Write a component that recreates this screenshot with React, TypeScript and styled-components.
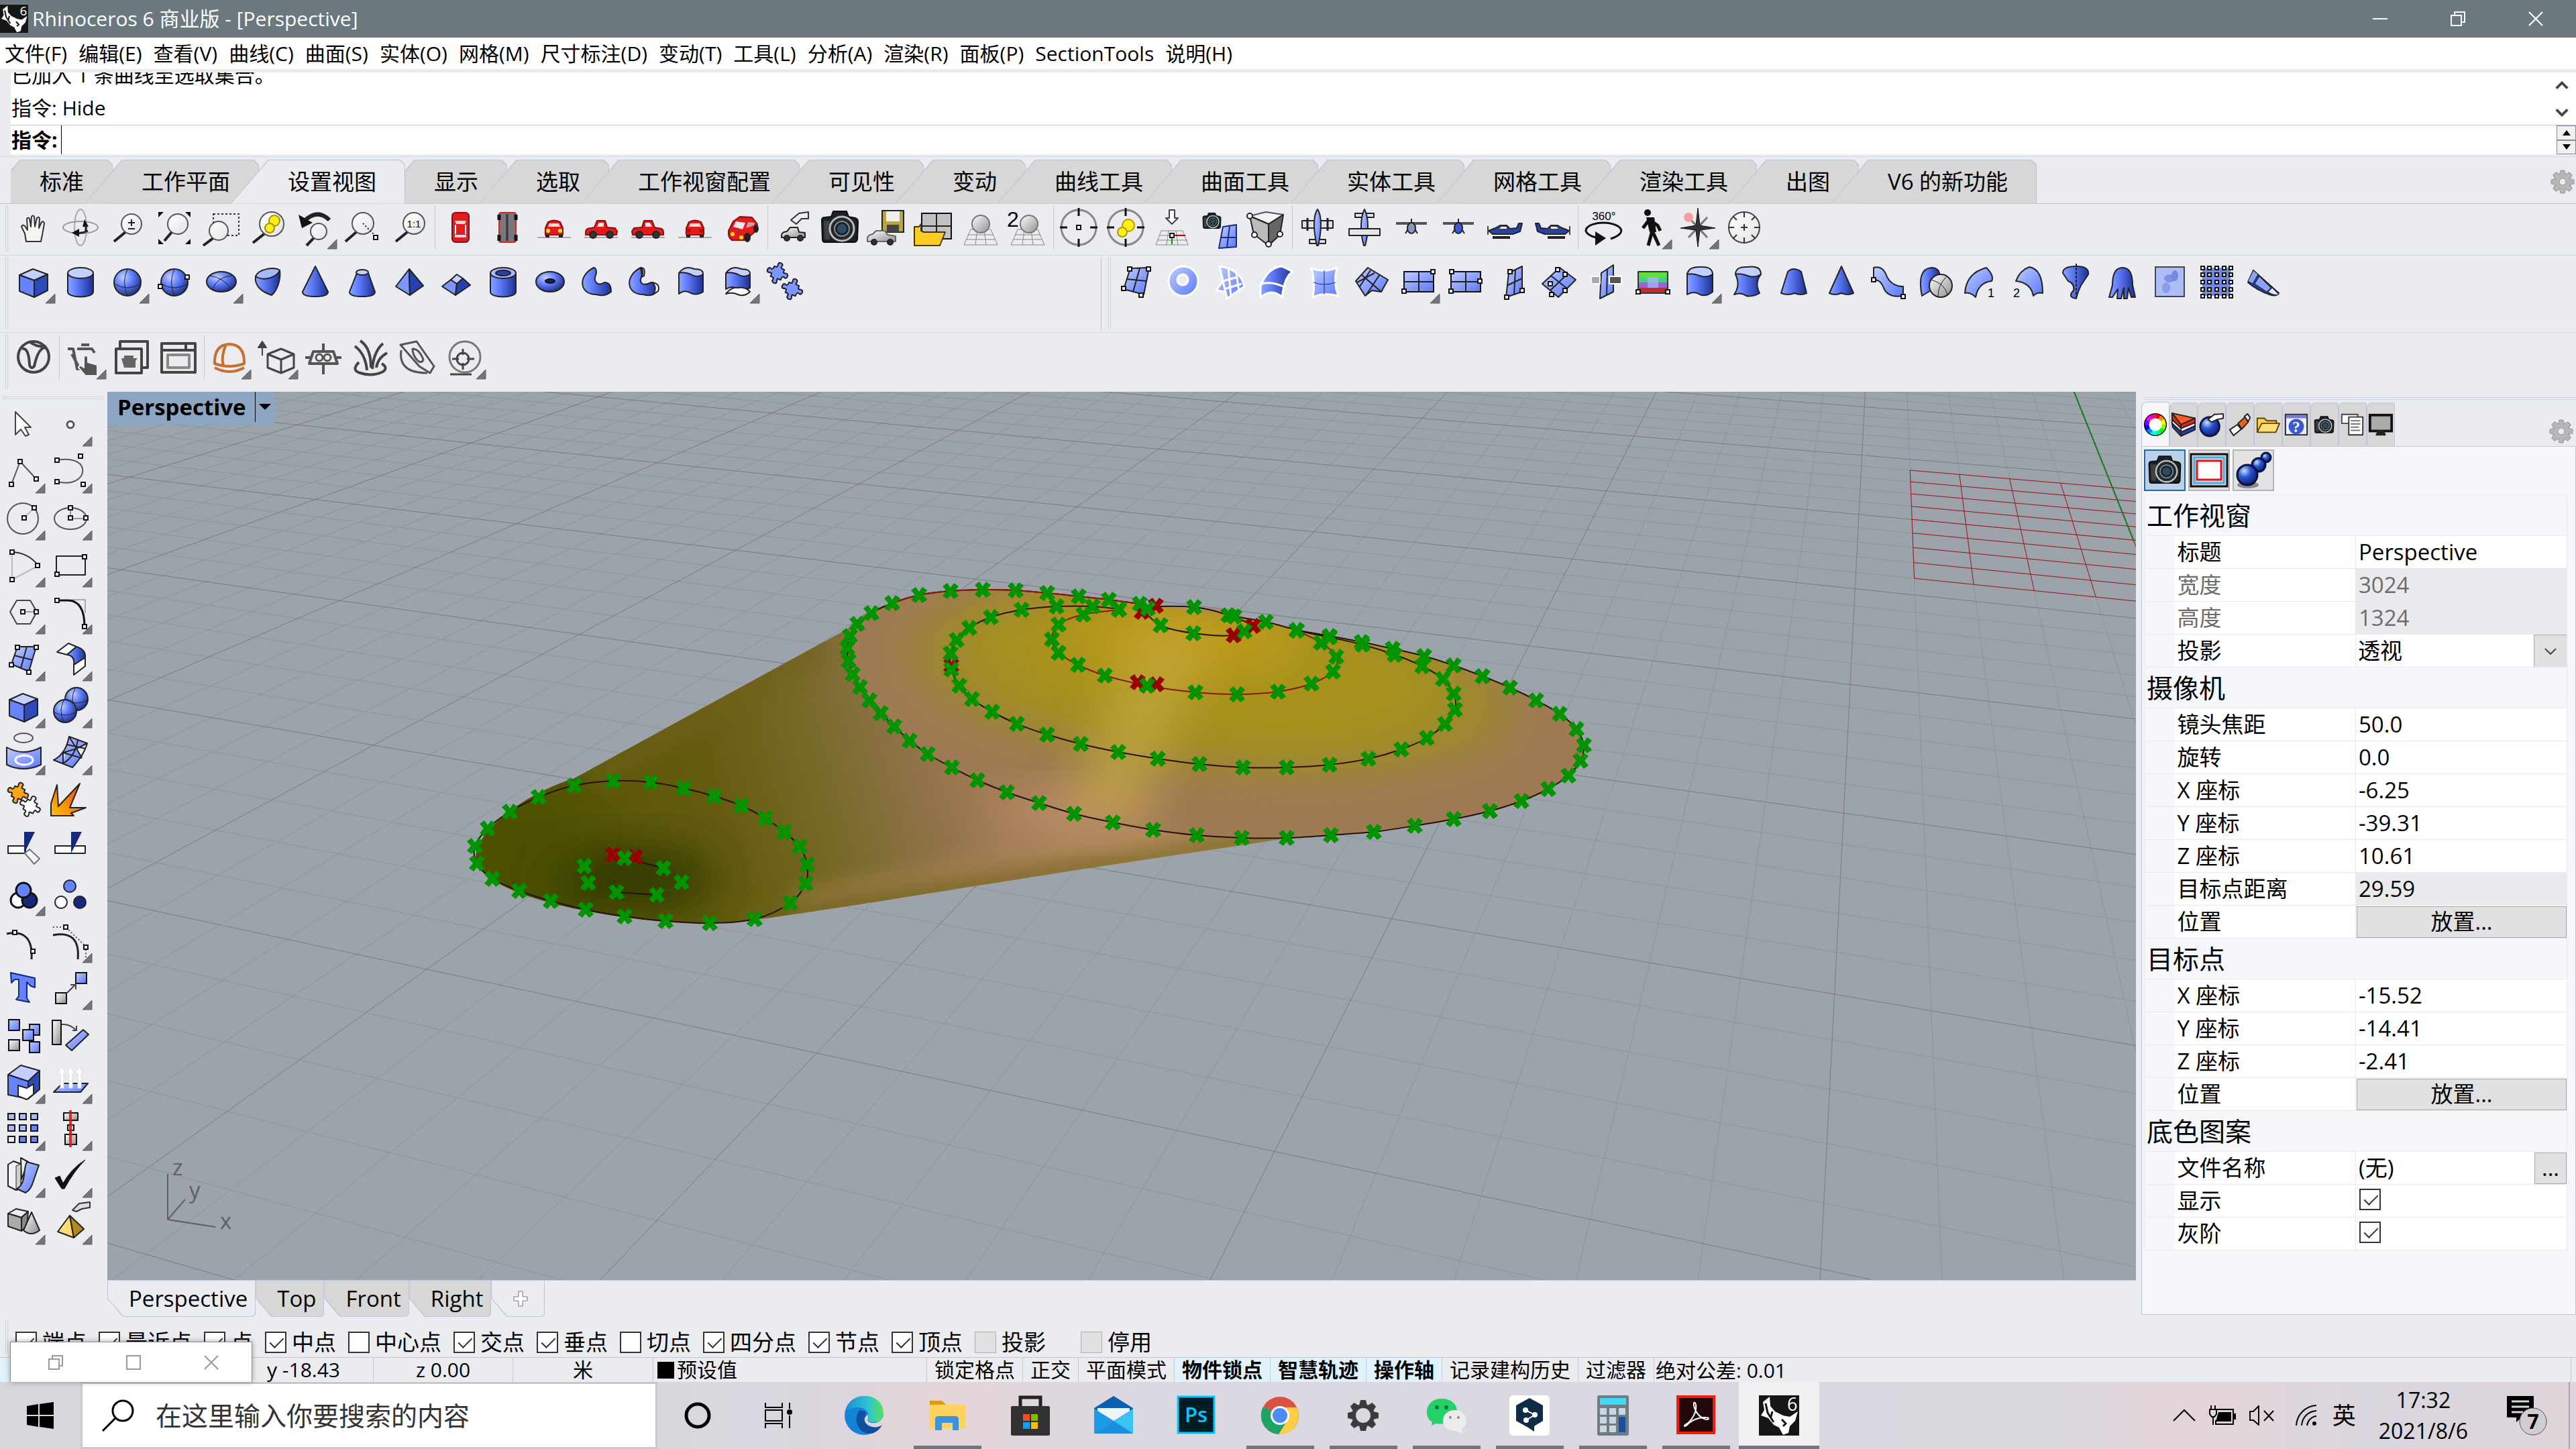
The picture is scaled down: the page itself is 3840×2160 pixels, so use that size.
import React, { ReactNode } from 'react';
import styled, { createGlobalStyle, css } from 'styled-components';

const FONT = `"Open Sans", "Noto Sans CJK SC", sans-serif`;

const GlobalStyle = createGlobalStyle`
  * { box-sizing: border-box; }
  body { margin: 0; background: #ebecf0; }
  button, input, select { font: inherit; color: inherit; margin: 0; }
  svg { display: block; }
`;

/* ---------- drawing primitives ---------- */

type PProps = { d: string; f?: string; s?: string; w?: number; dash?: string; o?: number };
const P = ({ d, f = 'none', s = '#222', w = 2, dash, o }: PProps) => (
  <path d={d} fill={f} stroke={s} strokeWidth={w} strokeDasharray={dash} opacity={o} strokeLinejoin="round" />
);
const E = ({ x, y, rx, ry = rx, f = 'none', s = '#222', w = 2 }: { x: number; y: number; rx: number; ry?: number; f?: string; s?: string; w?: number }) => (
  <ellipse cx={x} cy={y} rx={rx} ry={ry} fill={f} stroke={s} strokeWidth={w} />
);
const H = ({ x, y }: { x: number; y: number }) => (
  <rect x={x - 3} y={y - 3} width="6" height="6" fill="#fff" stroke="#111" strokeWidth="2" />
);
const B = ({ x, y, w = 16, h = 16, f = 'url(#patch)' }: { x: number; y: number; w?: number; h?: number; f?: string }) => (
  <rect x={x} y={y} width={w} height={h} fill={f} stroke="#111" strokeWidth="2" />
);
const Lens = ({ x, y, r, hx, hy }: { x: number; y: number; r: number; hx: number; hy: number }) => (
  <>
    <P d={`M${x - r * 0.6} ${y + r * 0.8}L${hx} ${hy}`} s="#222" w={4} />
    <E x={x} y={y} rx={r} f="url(#glass)" s="#555" />
  </>
);
const Puzzle = ({ f }: { f: string }) => (
  <P f={f} d="M-8 -8L-4 -8C-2 -10 -5 -12 -3 -15C0 -17 4 -15 3 -12C1 -9 3 -8 8 -8L8 -4C10 -2 12 -5 15 -3C17 0 15 4 12 3C9 1 8 3 8 8L3 8C1 9 5 12 3 15C0 17 -5 15 -3 11C-2 9 -4 8 -8 8L-8 4C-9 1 -12 5 -15 3C-17 0 -15 -5 -11 -3C-9 -2 -8 -4 -8 -8Z" />
);
const Camera = () => (
  <>
    <P f="#1d2124" s="#0c0c0c" d="M8 24 Q8 20 13 20 L22 19 L25 11 L45 11 L48 19 L58 21 Q62 22 62 27 L61 53 Q60 57 56 57 L13 57 Q9 57 9 53 Z" />
    <P f="#3b4146" s="none" d="M11 25h9v28h-8z" />
    <E x={38} y={37} rx={18} f="#23282b" s="#b9bdbf" w={3} />
    <E x={38} y={37} rx={11} f="#16222a" s="#7f8a8c" w={2} />
    <E x={38} y={37} rx={6} f="#29504e" s="#304a7a" w={2} />
  </>
);
const Globe = ({ x, y, r }: { x: number; y: number; r: number }) => <E x={x} y={y} rx={r} f="url(#navy)" s="#0b1240" w={3} />;
const Gear = ({ size = 36 }: { size?: number }) => (
  <svg width={size} height={size} viewBox="-18 -18 36 36" aria-hidden="true">
    {[0, 45, 90, 135, 180, 225, 270, 315].map((a) => (
      <path key={a} d="M-3 -17h6l2 8h-10z" fill="#b7b7b9" stroke="#98989a" transform={`rotate(${a})`} />
    ))}
    <circle r="11" fill="#b7b7b9" />
    <circle r="5" fill="#ebecf0" stroke="#98989a" />
  </svg>
);
const Ground = () => <P d="M10 50H60" s="#a9abad" w={2} />;
const CarBody = () => (
  <>
    <P f="#e21c1c" s="#8d0d0d" d="M12 42 Q12 36 20 36 L25 35 L29 25 L41 25 L44 35 L56 36 L59 41 L58 46 H12Z" />
    <P f="#f4e4e4" s="none" d="M29 34 L32 28 H39 V34Z" />
    <E x={23} y={46} rx={5} f="#333" />
    <E x={48} y={46} rx={5} f="#333" />
  </>
);
const CarFront = ({ lamp }: { lamp: string }) => (
  <>
    <P f="#e21c1c" s="#8d0d0d" d="M26 27 Q35 22 44 27 L48 36 V46 H22 V36Z" />
    <P f="#f6dada" s="none" d="M28 29 H42 L44 34 H26Z" />
    <E x={26} y={40} rx={3} f={lamp} s="none" />
    <E x={44} y={40} rx={3} f={lamp} s="none" />
    <P s="#222" w={4} d="M22 48h6M42 48h6" />
  </>
);
const Plane = () => (
  <>
    <P f="#dfe2e6" d="M12 25 H58 V36 H12Z M23 53 H47 V59 H23Z" />
    <P w={3} d="M20 21V40M50 21V40" />
    <P f="url(#patch)" d="M35 8 C42 18 41 40 36 62 H34 C29 40 28 18 35 8Z" />
  </>
);
const Mesh = ({ y = 38 }: { y?: number }) => (
  <P s="#888" w={1} d={`M20 ${y}H50L60 61H10ZM16 ${y + 8}H54M13 ${y + 15}H57M30 ${y}L27 61M40 ${y}L43 61`} />
);

/* ---------- tool icons, each on a 70 unit square ---------- */

const I: Record<string, ReactNode> = {
  hand: <P f="#f7f5f0" s="#333" d="M24 56 L22 44 L17 34 Q18 30 22 33 L26 39 L25 22 Q27 19 29 22 L31 34 L32 19 Q34 16 36 19 L37 34 L40 21 Q43 18 44 22 L43 36 L47 27 Q50 25 51 29 L48 46 L46 56Z" />,
  orbit: <><E x={35} y={35} rx={9} ry={27} s="#aaa" /><E x={35} y={35} rx={26} ry={9} s="#999" /><P f="#111" s="none" d="M22 43l11-6v12zM38 34l3-11 6 11z" /><P w={3} d="M43 32V42M31 43Q38 44 46 40" /></>,
  zoomDyn: <><Lens x={41} y={30} r={15} hx={15} hy={56} /><P w={2} d="M36 28h10M41 23v10M36 37h10" /></>,
  zoomExt: <><Lens x={40} y={30} r={15} hx={20} hy={55} /><P f="#111" s="none" d="M11 12h8l-8 8zM59 12h-8l8 8zM11 60h8l-8-8zM59 60h-8l8-8z" /></>,
  zoomWin: <><P dash="3 3" s="#333" d="M23 15H61V47H23Z" /><Lens x={31} y={40} r={14} hx={8} hy={62} /></>,
  zoomSel: <><Lens x={40} y={30} r={18} hx={12} hy={58} /><E x={44} y={25} rx={8} f="#ffee1c" s="#a59000" /><E x={37} y={36} rx={7} f="#ffee1c" s="#a59000" /></>,
  undoView: <><P s="#222" w={6} d="M18 26Q38 6 56 24" /><P f="#111" s="none" d="M10 16l5 20 16-8z" /><Lens x={40} y={41} r={12} hx={22} hy={62} /></>,
  zoomTarget: <><Lens x={36} y={29} r={16} hx={10} hy={56} /><P dash="2 3" d="M36 29L53 46" /><H x={55} y={50} /></>,
  zoomOne: <><Lens x={42} y={29} r={16} hx={15} hy={56} /><text x="42" y="35" fontSize="15" textAnchor="middle" fontFamily="Liberation Sans">1:1</text></>,
  carTop: <><rect x="23" y="13" width="25" height="44" rx="5" fill="#e21c1c" stroke="#8d0d0d" strokeWidth="2" /><P f="#f6dada" s="none" d="M27 25h17l-2 5H29zM27 46h17v4H27z" /><P s="#fff" d="M28 31v14M43 31v14" /></>,
  carBottom: <><rect x="23" y="13" width="25" height="44" rx="3" fill="#77777f" stroke="#e21c1c" strokeWidth="2" /><P w={5} s="#111" d="M23 16v8M48 16v8M23 46v9M48 46v9" /><P s="#333" w={3} d="M35 15V55" /></>,
  carFront: <><Ground /><CarFront lamp="#ffe11a" /></>,
  carRight: <><Ground /><CarBody /></>,
  carLeft: <><Ground /><g transform="translate(70 0) scale(-1 1)"><CarBody /></g></>,
  carBack: <><Ground /><CarFront lamp="#c00" /></>,
  carPersp: <><P f="#e21c1c" s="#8d0d0d" d="M15 40L22 26L32 19L50 20L58 30L56 40L40 54L20 54Q14 50 15 40Z" /><P f="#f8e6e6" s="none" d="M22 34L26 26L40 28L36 38Z" /><P f="#c9a0a0" s="none" d="M41 36L44 27L54 28L53 32Z" /><E x={21} y={45} rx={3} f="#ffe11a" s="none" /><E x={34} y={50} rx={3} f="#ffe11a" s="none" /><E x={43} y={50} rx={4} ry={6} f="#222" /><E x={56} y={37} rx={3} ry={5} f="#222" /></>,
  namedView: <><P f="#eee" s="#333" d="M32 24 L44 14 L58 12 V22 L48 22 L40 30Z" /><P f="url(#gray)" d="M18 47 Q18 42 26 41 L31 35 H42 L44 42 L53 43 V50 H18Z" /><E x={26} y={51} rx={4} f="#333" /><E x={46} y={51} rx={4} f="#333" /></>,
  camera: <Camera />,
  saveView: <><rect x="28" y="10" width="32" height="32" fill="#b7a446" stroke="#222" strokeWidth="2" /><rect x="34" y="11" width="20" height="15" fill="#eee" /><rect x="35" y="31" width="18" height="11" fill="#444" /><P f="url(#gray)" s="#666" d="M6 52Q6 46 14 45L19 40H32L36 46L48 48V56H6Z" /><E x={16} y={57} rx={4} f="#333" /><E x={40} y={57} rx={4} f="#333" /></>,
  openView: <><rect x="17" y="14" width="44" height="38" fill="#c2c2c4" stroke="#111" strokeWidth="2" /><P d="M39 14V52M17 33H61" /><P f="#fc2" s="#4a3500" d="M6 62V34h7l3-4v10L20 42H52L44 62Z" /></>,
  sphereOne: <><Mesh /><E x={35} y={30} rx={13} f="url(#gray)" s="#777" /></>,
  sphereTwo: <><Mesh /><E x={37} y={30} rx={13} f="url(#gray)" s="#777" /><text x="4" y="34" fontSize="32" fontFamily="Liberation Sans">2</text></>,
  target: <><E x={35} y={35} rx={26} s="#888" w={3} /><P w={3} s="#111" d="M35 6V18M35 52V64M7 35H18M52 35H63" /><H x={35} y={35} /></>,
  targetSel: <><E x={35} y={35} rx={26} s="#888" w={3} /><E x={39} y={32} rx={9} f="#ffee1c" s="#b09a00" /><E x={30} y={42} rx={7} f="#ffee1c" s="#b09a00" /><P w={3} s="#111" d="M35 6V18M35 52V64M7 35H18M52 35H63" /></>,
  cplane: <><P s="#888" w={1} d="M18 40H50L58 61H10ZM15 47H54M12 54H57M29 40L26 61M40 40L43 61" /><P f="#fff" s="#444" d="M30 9h8v12h5l-9 9-9-9h5z" /><P s="#090" d="M34 46V60" /><P s="#c00" d="M34 47H54" /><H x={34} y={47} /></>,
  camPlane: <><g transform="translate(6 8) scale(.5)"><Camera /></g><P f="url(#patch)" s="#1d2c80" d="M40 34L60 31V64L34 66Z M50 33L46 65M37 50H60" /></>,
  cage: <><P f="#f3f3f3" s="#555" d="M10 18L34 12L60 16L38 30Z" /><P f="#bbb" d="M10 18L38 30V62L16 45Z" /><P f="#666" d="M60 16L38 30V62L55 46Z" /><E x={10} y={18} rx={4} f="#fff" /><E x={17} y={46} rx={4} f="#fff" /><E x={38} y={60} rx={4} f="#fff" /><E x={55} y={45} rx={4} f="#fff" /></>,
  planeTop: <Plane />,
  planeBottom: <><P f="#dfe2e6" d="M21 14H49V20H21Z" /><P f="url(#patch)" d="M35 8 C42 22 41 44 36 62 H34 C29 44 28 22 35 8Z" /><P f="#e3e5e8" d="M12 37H58V47H12Z" /></>,
  planeFront: <><P d="M12 29H58" s="#555" w={4} /><P d="M35 22v8M26 44l5-8M44 44l-5-8" /><E x={35} y={36} rx={6} ry={8} f="#8d97c4" /></>,
  planeBack: <><P d="M12 29H58" s="#555" w={4} /><P d="M35 22v8M26 44l5-8M44 44l-5-8" /><E x={35} y={36} rx={6} ry={8} f="#3d5bd8" /></>,
  planeLeft: <><P f="#2541b4" d="M10 40L20 36L27 32H37L42 37L52 36L55 29H60L57 41L46 45H16Z" /><P f="#e8eefc" s="none" d="M25 38l4-4h8v5z" /><P s="#444" w={2} d="M9 33V46M20 38H44" /><P w={4} d="M16 50H42" /></>,
  planeRight: <g transform="translate(70 0) scale(-1 1)"><P f="#2541b4" d="M10 40L20 36L27 32H37L42 37L52 36L55 29H60L57 41L46 45H16Z" /><P f="#e8eefc" s="none" d="M25 38l4-4h8v5z" /><P s="#444" w={2} d="M9 33V46M20 38H44" /><P w={4} d="M16 50H42" /></g>,
  turn: <><text x="36" y="24" fontSize="17" textAnchor="middle" fontFamily="Liberation Sans">360°</text><P w={3} d="M24 50C-4 42 12 28 35 28S76 42 46 52" s="#111" /><P f="#111" s="none" d="M23 41l16 10-16 11z" /></>,
  walk: <><E x={31} y={13} rx={5} f="#111" s="none" /><P s="#111" w={5} d="M33 22L38 40L32 62M38 40L48 62M33 24L24 36M34 24L46 32L50 40" /><P f="#111" s="none" d="M29 20h12l3 22H34z" /></>,
  compass: <><P s="#777" w={3} d="M22 20L50 50M50 20L22 50" /><P f="#333" s="#111" w={1} d="M36 6L39 32L62 36L39 39L36 64L33 39L10 36L33 32Z" /><E x={22} y={20} rx={7} f="#f4a0a0" s="none" /></>,
  dial: <><E x={35} y={35} rx={23} f="url(#glass)" s="#444" /><P s="#333" d="M35 12v8M35 50v8M12 35h8M50 35h8M30 35h10M35 30v10M19 19l5 5M51 51l-5-5M51 19l-5 5M19 51l5-5" /></>,

  box: <><P f="#c3d0ff" d="M14 25L34 16L56 24L36 33Z" /><P f="#6582ff" d="M14 25L36 33V58L14 49Z" /><P f="#2f49b8" d="M56 24L36 33V58L56 48Z" /></>,
  cylinder: <><P f="url(#tube)" d="M16 22V50C16 60 54 60 54 50V22" /><E x={35} y={22} rx={19} ry={8} f="#c3d0ff" /></>,
  sphere: <><E x={35} y={36} rx={20} f="url(#ball)" /><P w={1} d="M15 38Q35 50 55 38M35 16Q26 36 35 56" /></>,
  sphereH: <><E x={35} y={36} rx={20} f="url(#ball)" /><P w={1} d="M15 38Q35 50 55 38M35 16Q26 36 35 56" /><H x={54} y={28} /><H x={14} y={42} /></>,
  ellipsoid: <><E x={35} y={35} rx={22} ry={15} f="url(#ball)" /><P w={1} d="M18 26Q40 30 50 46M50 26Q28 28 22 46" /></>,
  paraboloid: <><P f="url(#tube)" d="M16 27C14 40 24 50 40 55C48 48 54 32 52 18Z" /><P f="#a8b9ff" d="M16 27C20 16 44 12 52 18C50 26 30 36 16 27Z" /></>,
  cone: <P f="url(#tube)" d="M35 12L54 50Q54 57 35 57Q16 57 16 50Z" />,
  truncCone: <><P f="url(#tube)" d="M27 22L16 50Q16 57 35 57Q54 57 54 50L44 22Z" /><E x={35} y={21} rx={9} ry={4} f="#c3d0ff" /></>,
  pyramid: <><P f="#7d96ff" d="M35 16L15 42L36 55Z" /><P f="#2742b0" d="M35 16L36 55L56 41Z" /></>,
  truncPyramid: <><P f="#7d96ff" d="M27 32L14 42L34 55L36 38Z" /><P f="#2742b0" d="M36 38L34 55L56 40L45 30Z" /><P f="#c3d0ff" d="M27 32L36 24L45 30L36 38Z" /></>,
  tube: <><P f="url(#tube)" d="M16 22V50C16 60 54 60 54 50V22" /><E x={35} y={22} rx={19} ry={8} f="#a8b9ff" /><E x={35} y={22} rx={11} ry={4} f="#2742b0" /></>,
  torus: <><E x={35} y={35} rx={21} ry={15} f="url(#ball)" /><E x={35} y={34} rx={7} ry={3} f="#16206e" s="#111" /></>,
  pipe: <P f="url(#tube)" d="M30 14C6 26 8 54 34 54Q46 58 56 50Q56 36 46 36C36 42 28 36 34 22Q34 14 30 14Z" />,
  pipeCap: <><P f="url(#tube)" d="M30 14C6 26 8 54 34 54Q46 58 54 50Q54 36 46 36C34 42 26 38 32 26Z" /><P f="#fff" d="M30 14Q38 14 35 26L31 28Q36 20 30 14ZM47 36Q60 38 56 49L48 54Q56 44 47 36Z" /></>,
  extrude: <><P f="url(#tube)" d="M17 22V53Q26 46 35 52Q44 56 53 50V22" /><P f="#c3d0ff" d="M17 22Q26 10 40 16Q54 16 53 24Q44 30 35 24Q26 20 17 22Z" /></>,
  extrudeCap: <><P f="url(#tube)" d="M17 22V46Q26 40 35 46Q44 50 53 44V22" /><P f="#c3d0ff" d="M17 22Q26 10 40 16Q54 16 53 24Q44 30 35 24Q26 20 17 22Z" /><P f="#fff" d="M17 53Q26 42 35 44Q46 42 53 50Q44 58 35 54Q26 50 17 53Z" /></>,
  puzzles: <><g transform="translate(24 22) rotate(20)"><Puzzle f="#7d96ff" /></g><g transform="translate(46 46) rotate(20)"><Puzzle f="#7d96ff" /></g></>,

  srfPts: <><P f="url(#patch)" d="M26 15L54 14L46 54L16 46Z M40 15L30 50M21 31L50 34" /><H x={25} y={16} /><H x={53} y={16} /><H x={16} y={45} /><H x={42} y={55} /></>,
  srfRing: <><E x={35} y={34} rx={22} f="url(#patch)" s="#fff" w={3} /><E x={34} y={32} rx={8} f="#ebecf0" s="#fff" w={3} /></>,
  srfLoft: <P f="url(#patch)" s="#fff" w={3} d="M19 12Q50 16 56 42L30 60L28 50L14 48L24 34Z M24 34L46 28M26 46L52 38M32 14L36 58M24 34L30 60M44 22L48 50" />,
  srfSweep: <P f="url(#tube)" s="#fff" w={3} d="M10 42Q20 14 42 12L58 20Q46 26 42 58Q28 44 10 58Z M12 38Q26 34 44 42" />,
  srfPatch: <><P f="url(#patch)" s="#fff" w={3} d="M16 15Q36 22 54 14Q48 36 56 56Q34 50 18 58Q22 36 16 15Z" /><P w={1} s="#1d2c80" d="M35 18V54M19 36Q36 42 52 36" /></>,
  srfNet: <P f="url(#patch)" s="#222" w={2} d="M12 34L30 14L60 32L50 50L36 48L26 56ZM20 24L50 50M34 18L18 42M48 24L28 54M14 36L40 22" />,
  srfPlane: <><B x={14} y={20} w={44} h={30} /><P d="M36 20V50M14 35H58" /><H x={57} y={20} /><H x={14} y={49} /></>,
  srfPlane3: <><B x={14} y={20} w={44} h={30} /><P d="M36 20V50M14 35H58" /><H x={15} y={20} /><H x={14} y={49} /><H x={57} y={34} /></>,
  srfVert: <><P f="url(#patch)" d="M30 22L50 12V50L26 58Z M40 17L38 54M29 40L50 30" /><H x={32} y={20} /><H x={50} y={48} /><H x={27} y={58} /></>,
  srfFree: <><P f="url(#patch)" d="M10 38L36 14L60 32L34 58Z M23 26L47 45M22 48L48 23" /><H x={33} y={17} /><H x={44} y={24} /><H x={22} y={38} /><H x={44} y={48} /><H x={24} y={54} /></>,
  srfCut: <><P f="url(#patch)" d="M28 22L46 10V50L26 60Z M37 16L36 55" /><P f="#aaa" s="#fff" d="M13 27H26V38H13Z" /><P f="#555" s="#fff" d="M40 27H58V38H40Z" /></>,
  srfHeat: <><rect x="13" y="20" width="44" height="8" fill="#5fe03a" /><rect x="13" y="28" width="44" height="8" fill="#4ccb8c" /><rect x="13" y="36" width="44" height="8" fill="#9c63cf" /><rect x="13" y="44" width="44" height="8" fill="#c22c2c" /><rect x="27" y="28" width="16" height="16" fill="#a6b9ff" opacity=".7" /><P s="#333" d="M13 20H57V52H13Z" /><H x={13} y={50} /><H x={57} y={50} /></>,
  srfExt1: <><P f="url(#tube)" d="M16 22V54Q26 48 35 54Q44 58 54 50V22" /><P f="#c3d0ff" d="M16 24Q18 12 36 13Q54 12 54 24Q44 30 35 26Q24 22 16 24Z" /></>,
  srfExt2: <><P f="url(#tube)" d="M18 24Q26 40 16 54Q26 50 34 56Q44 58 54 52Q46 36 56 24" /><P f="#c3d0ff" d="M18 24Q18 12 36 13Q56 10 56 24Q46 30 36 26Q26 22 18 24Z" /></>,
  srfTaper: <P f="url(#tube)" d="M26 20Q34 12 46 20L54 52Q46 56 36 52Q26 56 16 52Z" />,
  srfPoint: <P f="url(#tube)" d="M36 12L54 52Q46 56 36 52Q26 56 18 52Z" />,
  srfRibbon: <><P f="url(#patch)" d="M14 14Q28 10 34 28Q42 42 58 42V56Q34 60 28 42Q24 32 14 32Z" /><H x={14} y={32} /><H x={58} y={57} /></>,
  srfWrap: <><P f="url(#tube)" d="M16 56Q8 16 30 14Q40 14 42 22V40Z" /><E x={44} y={41} rx={17} f="url(#gray)" /><P w={1} d="M30 32Q50 38 54 54M52 28Q40 40 40 57" /></>,
  srfRail1: <><P f="url(#patch)" d="M10 52Q12 22 42 14Q54 26 50 34Q30 36 26 58Q18 50 10 52Z" /><text x="44" y="58" fontSize="18" fontFamily="Liberation Sans">1</text></>,
  srfRail2: <><P f="url(#patch)" d="M16 34Q22 18 36 13Q56 16 56 52Q48 50 42 56Q38 36 16 34Z" /><text x="12" y="58" fontSize="18" fontFamily="Liberation Sans">2</text></>,
  srfRevolve: <><P f="url(#tube)" d="M16 22Q16 12 36 12Q56 12 54 24L46 36Q40 44 36 60Q22 58 32 48Q34 38 24 34Z" /><P dash="4 2" d="M36 8V60" /></>,
  srfDrape: <P f="url(#tube)" d="M20 40Q20 14 35 14Q50 14 50 40L54 58H48L44 44L42 60H37V44L33 60H27L28 46L20 58H15Z" />,
  srfPicture: <><rect x="14" y="13" width="43" height="44" fill="#aebdf6" stroke="#445" strokeWidth="2" /><E x={35} y={30} rx={8} ry={6} f="#7d92e4" s="none" /><E x={43} y={26} rx={5} ry={8} f="#7388e0" s="none" /><E x={30} y={44} rx={6} ry={8} f="#899ce9" s="none" /></>,
  srfGrid: <><rect x="14" y="14" width="42" height="42" fill="#7288e8" />{[14, 24, 35, 46, 56].map((y) => [14, 24, 35, 46, 56].map((x) => <rect key={`${x}-${y}`} x={x - 2} y={y - 2} width="5" height="5" fill="#fff" stroke="#111" strokeWidth="2" />))}</>,
  srfEraser: <><P f="#27409f" d="M12 36L20 18L58 52Q54 58 44 54Q26 48 12 36Z" /><P f="#8da2ff" w={1} d="M12 34L20 18L27 24L19 38Z M22 38L29 27L46 44L40 50Z" /><P f="#dfe6ff" w={1} d="M42 50L48 44L58 54Q50 56 42 50Z" /></>,

  vray: <><E x={35} y={34} rx={23} s="#444" w={4} /><P s="#444" w={4} d="M18 22Q28 20 29 46Q31 53 36 48Q42 20 53 20M30 12Q40 20 53 18" /></>,
  teapotHand: <><P s="#555" w={4} d="M10 22L18 22L24 52H44M24 22H46L50 28M30 16H42M26 48L16 30" /><P f="#555" s="#eee" d="M34 34V50L28 46L26 50L36 62H54V46L40 42V34Q37 30 34 34Z" /></>,
  teapotFrame: <><P s="#444" w={4} d="M18 22V11H59V50H50" /><P s="#444" w={4} d="M12 22H50V58H12Z" /><P f="#666" s="none" d="M20 36h4v-4h14v4h6l-3 4v10H24z" /></>,
  frameWin: <><P s="#444" w={4} d="M10 14H60V57H10ZM10 24H60M46 14V24" /><P s="#888" w={4} d="M19 31H51V50H19Z" /></>,
  dome: <><P s="#c96f2d" w={4} d="M13 44Q12 16 35 15Q58 16 57 44Q35 52 13 44ZM30 15Q22 34 26 47" /><P s="#c96f2d" w={4} d="M13 50Q35 62 57 50" /></>,
  cubeUp: <><P s="#444" w={3} d="M22 30L42 22L61 30V50L42 58L22 50ZM22 30L42 38L61 30M42 38V58" /><P f="#444" s="#444" d="M14 11l-6 9h12zM14 20v12" /></>,
  planeInf: <><P s="#555" w={4} d="M20 26H50L56 44H14ZM8 35H18M52 35H62M35 14V26M35 44V60" /><E x={29} y={35} rx={5} s="#555" w={3} /><E x={41} y={35} rx={5} s="#555" w={3} /></>,
  fur: <P s="#444" w={4} d="M18 42Q6 54 20 58Q38 64 54 56Q62 50 52 44M30 54Q28 30 12 18M36 50Q36 20 20 10M38 52Q40 26 54 14M44 50Q46 36 60 28" />,
  clipper: <><P s="#555" w={3} d="M10 16L34 11L60 48L54 58L38 48Z" /><P s="#555" w={3} d="M28 22Q38 22 44 38Q42 44 36 40Q28 32 28 22Z" /><P s="#555" w={3} d="M11 24Q6 58 50 58" /></>,
  domeTarget: <><E x={36} y={34} rx={23} s="#777" w={3} /><E x={33} y={37} rx={9} s="#444" w={3} /><P s="#444" w={3} d="M33 22V31M33 43V53M17 37H27M39 37H50M14 60H46" /></>,

  select: <P f="#fff" s="#444" d="M23 16V50L31 42L38 52L43 50L37 39H46Z" />,
  point: <E x={35} y={35} rx={5} f="#fff" s="#555" w={3} />,
  polyline: <><P s="#555" d="M17 54L30 20L54 46" /><H x={17} y={54} /><H x={30} y={20} /><H x={54} y={46} /></>,
  curve: <><P s="#555" d="M15 18C70 8 62 62 15 50" /><H x={15} y={18} /><H x={15} y={50} /><H x={50} y={12} /><H x={54} y={54} /></>,
  circle: <><E x={34} y={35} rx={23} s="#555" /><P s="#bbb" d="M35 35L50 20" /><H x={36} y={34} /><H x={51} y={19} /></>,
  ellipse: <><E x={35} y={35} rx={24} ry={16} s="#555" /><P s="#999" d="M35 19V35H58" /><H x={35} y={34} /><H x={58} y={34} /><H x={35} y={19} /></>,
  arc: <><P s="#bbb" d="M18 15V56L56 36" /><P s="#333" d="M18 15Q42 16 56 34" /><H x={18} y={15} /><H x={56} y={35} /><H x={18} y={56} /></>,
  rect: <><P d="M14 21H57V49H14Z" /><H x={56} y={22} /><H x={15} y={48} /></>,
  polygon: <><P s="#444" d="M15 34L25 17H45L55 34L45 52H25Z" /><P s="#999" d="M34 34H54" /><H x={34} y={34} /><H x={54} y={34} /></>,
  fillet: <><P s="#aaa" d="M36 16H57V36" /><P s="#111" w={3} d="M16 17H32Q56 18 56 56" /><H x={15} y={17} /><H x={56} y={56} /></>,
  patch: <><P f="url(#patch)" d="M26 16H54L43 53L17 42Z M40 16L31 48M21 29L49 36" /><H x={26} y={17} /><H x={54} y={17} /><H x={17} y={43} /><H x={43} y={54} /></>,
  srfFillet: <><P f="#fff" d="M15 24L32 11L44 16L30 28Z" /><P f="#fff" d="M57 32V45L40 58V43Z" /><P f="url(#tube)" d="M30 28L44 16Q58 20 57 32L40 43Q42 30 30 28Z" /></>,
  spheres: <><E x={44} y={24} rx={17} f="url(#ball)" /><P w={1} d="M28 26Q44 34 60 26M42 8Q34 24 42 40" /><E x={27} y={42} rx={17} f="url(#ball)" /><P w={1} d="M11 44Q27 52 43 44M25 26Q17 42 25 58" /></>,
  project: <><E x={35} y={12} rx={14} ry={7} s="#555" /><P f="url(#patch)" d="M10 26Q35 40 61 26V52Q35 64 10 52Z" /><E x={36} y={45} rx={13} ry={7} s="#fff" w={3} /></>,
  mesh: <P f="url(#patch)" d="M33 10L60 20Q56 36 38 56L10 45Q28 36 33 10Z M24 34L52 42M30 22L58 28M46 15Q42 40 24 50M33 10L44 28L24 34L24 50M60 20L44 28L52 42" />,
  join: <><g transform="translate(45 44) rotate(25)"><Puzzle f="#fff" /></g><g transform="translate(27 24) rotate(20)"><Puzzle f="#ffa515" /></g></>,
  explode: <P f="url(#fire)" d="M6 58V40L15 12L17 44L49 10L34 46H58L36 54L40 58Z" />,
  trim: <><P f="#fff" d="M12 33H38V44H12Z" /><P f="#f4f4f4" s="#777" d="M37 44L44 38L59 52L51 60Z" /><P f="#16287c" s="none" d="M36 12H52L36 44Z" /></>,
  split: <><P f="#fff" d="M12 33H57V44H12Z" /><P f="#16287c" s="none" d="M36 12H52L36 44Z" /></>,
  group: <><E x={27} y={44} rx={11} f="#fff" w={3} s="#111" /><E x={44} y={44} rx={11} f="#16287c" w={3} s="#111" /><E x={35} y={29} rx={11} f="#6582ff" w={3} s="#111" /></>,
  ungroup: <><E x={21} y={47} rx={9} f="#fff" /><E x={49} y={47} rx={9} f="#16287c" /><E x={34} y={23} rx={9} f="#6582ff" /></>,
  editPts: <><P w={3} d="M10 24Q50 16 47 62" /><H x={22} y={22} /><H x={49} y={50} /></>,
  ctrlPts: <><P w={3} d="M9 26Q50 18 46 62" /><P dash="2 3" s="#555" d="M9 14H28L58 43V62" /><H x={28} y={14} /><H x={58} y={44} /></>,
  text: <P f="#6582ff" s="#16287c" d="M16 12L52 20V34L46 32L40 26V50L44 56L24 52L28 47V22L22 22L17 27Z" />,
  move: <><B x={13} y={42} f="url(#gray)" /><B x={43} y={12} /><P d="M30 42L42 30M35 30H43V37" s="#444" /></>,
  copy: <><B x={13} y={12} /><B x={44} y={19} w={15} /><B x={34} y={27} /><B x={13} y={42} f="url(#gray)" /><B x={44} y={45} w={15} /></>,
  rotate: <><B x={8} y={13} w={13} h={36} f="url(#gray)" /><P f="url(#patch)" d="M54 27L62 34L37 58L28 50Z" /><P s="#444" d="M22 19Q34 18 44 28M38 28H44V21" /></>,
  boolean: <><P f="#c3d0ff" d="M12 24L31 10L59 18L42 34Z" /><P f="#6582ff" d="M12 24L42 34V60L12 54Z" /><P f="#2f49b8" d="M59 18L42 34V60L59 46Z" /><P f="#fff" d="M27 40L40 44L50 38V53L40 61L27 56Z" /></>,
  extrudeUp: <><P f="url(#patch)" d="M10 50L23 37H61L50 50Z" /><P f="#fff" s="#ddd" w={1} d="M20 44V22H16L22 12L28 22H25V44ZM33 44V22H29L35 12L41 22H38V44ZM46 44V22H42L48 12L54 22H51V44Z" /></>,
  array: <>{[12, 29, 46].map((y) => [12, 29, 46].map((x) => <B key={`${x}-${y}`} x={x} y={y} w={10} h={9} f={x === 12 && y === 46 ? '#eee' : x + y > 60 ? '#6582ff' : '#a8b9ff'} />))}</>,
  align: <><B x={25} y={11} w={21} h={11} f="url(#gray)" /><B x={31} y={29} w={9} h={8} f="#eee" /><B x={27} y={43} w={17} h={15} f="url(#gray)" /><P s="#d81111" w={4} d="M35 7V62" o={0.85} /></>,
  skew: <><P f="#eee" d="M31 8L42 14L32 40Z" /><P f="#f2f2f2" d="M12 18L20 13L31 17V54L24 56L12 50Z" /><P f="#cfcfcf" w={1} d="M24 20L31 17V54L24 56Z" /><P f="url(#patch)" d="M40 14L58 19Q54 30 50 42Q46 56 38 60L25 54Q34 50 36 34Q37 20 40 14Z" /></>,
  check: <P f="#111" s="#111" w={1} d="M12 38L19 35L24 46Q36 24 57 11Q40 28 26 54L22 54Z" />,
  solids: <><P f="#eee" d="M12 21L24 14L42 18L32 27Z" /><P f="#aaa" d="M12 21L32 27V47L12 40Z" /><P f="#888" d="M42 18L32 27V47L40 40Z" /><P f="url(#gray)" d="M47 19L35 46Q46 56 59 46Z" /></>,
  block: <><P f="#ffdc70" d="M34 24L16 48L40 57Z" /><P f="#b48a1a" d="M34 24L40 57L55 44Z" /><P f="#ddd" s="#333" d="M38 16L48 6L64 4V12L52 14L44 18Z" /></>,
};

type Spec = [name: string, label: string, flyout?: boolean];

/* ---------- frame ---------- */

const Page = styled.div`
  display: flex;
  flex-direction: column;
  min-height: 100vh;
  background: #ebecf0;
  color: #000;
  font-family: ${FONT};
  font-size: 30px;
  line-height: 40px;
`;

const TitleBar = styled.header`
  display: flex;
  align-items: center;
  height: 56px;
  background: #6b797f;
  color: #fff;
`;
const AppTitle = styled.h1`
  flex: 1;
  margin: 0;
  padding-left: 6px;
  font-size: 30px;
  font-weight: 400;
`;
const WindowButton = styled.button`
  display: grid;
  place-items: center;
  width: 116px;
  height: 56px;
  padding: 0 4px 0 0;
  border: 0;
  background: none;
`;
const MenuBar = styled.nav`
  display: flex;
  align-items: center;
  gap: 17px;
  height: 47px;
  padding: 0 7px;
  background: #fff;
`;
const MenuItem = styled.button`
  padding: 0;
  border: 0;
  background: none;
  white-space: nowrap;
`;

const CommandArea = styled.section`
  padding: 5px 0 3px 16px;
  border-bottom: 1px solid #d5dae8;
`;
const HistoryRow = styled.div`
  display: flex;
  height: 79px;
  background: #fff;
  border-bottom: 1px solid #b9c2da;
`;
const HistoryText = styled.div`
  display: flex;
  flex: 1;
  flex-direction: column;
  justify-content: flex-end;
  overflow: hidden;
  padding: 0 0 1px 1px;
  line-height: 49px;
  p { margin: 0; flex: none; }
`;
const Stepper = styled.div<{ $w: number }>`
  display: flex;
  flex-direction: column;
  width: ${(p) => p.$w}px;
`;
const StepButton = styled.button<{ $framed?: boolean }>`
  display: grid;
  flex: 1;
  place-items: center;
  padding: 0;
  border: ${(p) => (p.$framed ? '1px solid #8b8b8b' : '0')};
  background: ${(p) => (p.$framed ? '#f0f0f0' : '#fff')};
`;
const CommandRow = styled.div`
  display: flex;
  height: 43px;
  background: #fff;
  label { padding-left: 1px; font-weight: 700; line-height: 43px; }
`;
const CaretMark = styled.span`
  width: 1px;
  margin-left: 5px;
  background: #000;
`;
const CommandInput = styled.input`
  flex: 1;
  border: 0;
  outline: 0;
  background: none;
`;

const TabStrip = styled.div`
  display: flex;
  align-items: center;
  height: 70px;
  padding: 4px 2px 0 16px;
  border-bottom: 1px solid #bcc5dc;
`;
const TabList = styled.div`
  display: flex;
  flex: 1;
  height: 66px;
  overflow: hidden;
`;
const layered = (outer: string) => css`
  position: relative;
  z-index: 0;
  &::before, &::after {
    content: '';
    position: absolute;
    z-index: -1;
    clip-path: ${outer};
  }
`;
const ToolTab = styled.button<{ $active?: boolean }>`
  ${layered('polygon(56px 0, calc(100% - 8px) 0, 100% 8px, 100% 100%, 0 100%)')}
  ${(p) => p.$active && 'z-index: 2;'}
  flex: none;
  padding: 0 43px;
  border: 0;
  background: none;
  font-size: 33px;
  line-height: 64px;
  &::before { inset: 0 0 0 -42px; background: #bcc5dc; }
  &::after { inset: 1px 1px 0 -41px; background: ${(p) => (p.$active ? '#ebecf0' : '#d7d7d7')}; }
`;
const PlainButton = styled.button`
  display: grid;
  place-items: center;
  padding: 0;
  border: 0;
  background: none;
`;

const ToolRow = styled.div<{ $h: number; $line?: boolean }>`
  display: flex;
  height: ${(p) => p.$h}px;
  border-bottom: ${(p) => (p.$line ? '1px solid #d0d6e6' : '0')};
`;
const ToolBar = styled.div<{ $grow?: boolean; $pad?: number }>`
  display: flex;
  align-items: flex-start;
  flex: ${(p) => (p.$grow ? '1 1 0' : '0 0 auto')};
  max-width: ${(p) => (p.$grow ? '1623px' : 'none')};
  padding-top: ${(p) => p.$pad ?? 0}px;
`;
const Grip = styled.span`
  align-self: stretch;
  width: 4px;
  margin: 2px 3px 4px 8px;
  border: solid #c9d4e5;
  border-width: 0 1px;
`;
const Divider = styled.span<{ $full?: boolean }>`
  align-self: ${(p) => (p.$full ? 'stretch' : 'auto')};
  width: 1px;
  height: ${(p) => (p.$full ? 'auto' : '66px')};
  margin: 2px 2px 2px 3px;
  background: #c6c8cc;
`;
const ToolButton = styled.button`
  flex: none;
  width: 70px;
  height: 70px;
  padding: 0;
  border: 0;
  background: none;
`;

const Tool = ({ spec: [name, label, flyout] }: { spec: Spec }) => (
  <ToolButton aria-label={label}>
    <svg width="70" height="70" viewBox="0 0 70 70">
      {I[name]}
      {flyout && <path d="M67 53V67H53Z" fill="#747577" stroke="#606163" />}
    </svg>
  </ToolButton>
);
const Groups = ({ groups }: { groups: Spec[][] }) => (
  <>
    {groups.map((g, i) => (
      <React.Fragment key={i}>
        {i > 0 && <Divider />}
        {g.map((s) => <Tool key={s[0]} spec={s} />)}
      </React.Fragment>
    ))}
  </>
);

const Workspace = styled.main`
  display: grid;
  flex: 1;
  grid-template-columns: 160px minmax(0, 1fr) 656px;
`;
const SideTools = styled.aside`
  padding: 7px 6px 0 0;
`;
const SideGrip = styled.div`
  height: 4px;
  margin: 0 0 3px 3px;
  border: solid #c9d4e5;
  border-width: 1px 0;
`;
const SideGrid = styled.div`
  display: grid;
  grid-template-columns: 70px 70px;
`;
const ViewColumn = styled.div`
  display: flex;
  flex-direction: column;
`;
const Viewport = styled.div`
  position: relative;
  flex: 1;
  overflow: hidden;
  background: #9ca3ab;
`;
const SceneSvg = styled.svg`
  position: absolute;
  inset: 0;
  width: 100%;
  height: 100%;
`;
const ViewLabel = styled.button`
  position: absolute;
  top: 0;
  left: 0;
  display: flex;
  align-items: center;
  height: 49px;
  padding: 0 0 4px 15px;
  border: 0;
  border-radius: 0 0 6px 0;
  background: #8ca5c3;
  font-size: 33px;
  font-weight: 700;
  line-height: 45px;
`;
const ViewMenuMark = styled.span`
  display: grid;
  place-items: center;
  width: 29px;
  height: 45px;
  margin-left: 13px;
  border-left: 1px solid #000;
`;
const ViewTabs = styled.div`
  display: flex;
  height: 58px;
  padding-bottom: 3px;
  border-top: 1px solid #bcc5dc;
`;
const ViewTab = styled.button<{ $active?: boolean }>`
  ${layered('polygon(0 0, 100% 0, 100% calc(100% - 4px), calc(100% - 4px) 100%, 23px 100%, 0 50%)')}
  padding: 0 12px 0 32px;
  border: 0;
  background: none;
  font-size: 33px;
  line-height: 54px;
  &::before { inset: 0; background: #bcc5dc; }
  &::after { inset: 0 1px 1px 1px; background: ${(p) => (p.$active ? '#ebecf0' : '#d7d7d7')}; }
`;

/* ---------- properties panel ---------- */

const PanelColumn = styled.aside`
  display: flex;
  flex-direction: column;
  padding: 8px 0 6px 8px;
`;
const PanelTabs = styled.div`
  display: flex;
  align-items: flex-end;
  height: 66px;
`;
const PanelTab = styled.button<{ $active?: boolean }>`
  display: grid;
  place-items: center;
  width: 42px;
  height: ${(p) => (p.$active ? 66 : 65)}px;
  padding: 0;
  border: solid #bcc5dc;
  border-width: 1px 1px 0 1px;
  border-radius: 8px 3px 0 0;
  background: ${(p) => (p.$active ? '#f6f7fa' : '#d7d7d7')};
`;
const PanelGear = styled(PlainButton)`
  margin: 0 4px 4px auto;
`;
const PanelBody = styled.div`
  flex: 1;
  padding: 4px 12px 0 3px;
  border: 1px solid #bcc5dc;
  background: #f6f7fa;
`;
const PageButtons = styled.div`
  display: flex;
  gap: 4px;
  padding-bottom: 5px;
`;
const PageButton = styled.button<{ $active?: boolean }>`
  display: grid;
  place-items: center;
  width: 62px;
  height: 62px;
  padding: 0;
  border: ${(p) => (p.$active ? '2px solid #2468a8' : '2px solid #b4b4b4')};
  background: ${(p) => (p.$active ? '#b9d2ea' : '#e3e3e3')};
`;
const PropTable = styled.table`
  width: 100%;
  table-layout: fixed;
  border-collapse: collapse;
  border: 1px solid #e9eaee;
  font-size: 33px;
  line-height: 44px;
`;
const SectionCell = styled.th`
  height: 61px;
  padding: 0 3px;
  border-top: 1px solid #e9eaee;
  font-size: 39px;
  font-weight: 400;
  text-align: left;
`;
const IndentCol = styled.col`
  width: 45px;
`;
const NameCol = styled.col`
  width: 270px;
`;
const Indent = styled.td`
  padding: 0;
  border-top: 1px solid #e9eaee;
`;
const NameCell = styled.th<{ $dim?: boolean }>`
  height: 49px;
  padding: 0 4px;
  border-top: 1px solid #e9eaee;
  background: #fff;
  color: ${(p) => (p.$dim ? '#6d6d6d' : '#000')};
  font-weight: 400;
  text-align: left;
`;
const ValueCell = styled.td<{ $locked?: boolean }>`
  padding: 0;
  border-top: 1px solid #e9eaee;
  border-left: 1px solid #e9eaee;
  background: ${(p) => (p.$locked ? '#e9eaee' : '#fff')};
`;
const ValueRow = styled.div`
  display: flex;
  align-items: center;
  height: 48px;
`;
const ValueInput = styled.input<{ $dim?: boolean }>`
  flex: 1;
  width: 100%;
  min-width: 0;
  height: 44px;
  padding: 0 2px 0 4px;
  border: 0;
  outline: 0;
  background: none;
  color: ${(p) => (p.$dim ? '#6d6d6d' : '#000')};
`;
const SelectBox = styled.div`
  position: relative;
  flex: 1;
  select {
    width: 100%;
    height: 48px;
    padding: 0 60px 0 3px;
    border: 0;
    appearance: none;
    background: #fff;
  }
`;
const SelectArrow = styled.span`
  position: absolute;
  top: 0;
  right: 0;
  display: grid;
  place-items: center;
  width: 49px;
  height: 48px;
  border: solid #aaa;
  border-width: 1px 0 0 1px;
  background: #e1e1e1;
  pointer-events: none;
`;
const PushButton = styled.button<{ $small?: boolean }>`
  ${(p) => (p.$small ? 'width: 48px;' : 'flex: 1; margin-left: 1px;')}
  height: 47px;
  padding: 0;
  border: 1px solid #a8a8a8;
  background: #e1e1e1;
  line-height: 42px;
`;
const CheckBox = styled.input.attrs({ type: 'checkbox' })`
  position: relative;
  flex: none;
  width: 32px;
  height: 32px;
  border: 2px solid #333;
  appearance: none;
  background: #fff;
  &:disabled { border: 1px solid #adb2b5; background: #e0e0e0; }
  &:checked::after {
    content: '';
    position: absolute;
    top: 2px;
    left: 10px;
    width: 9px;
    height: 18px;
    border: solid #333;
    border-width: 0 2px 2px 0;
    transform: rotate(45deg);
  }
`;
const ValueCheck = styled(CheckBox)`
  margin: 0 0 4px 5px;
`;

/* ---------- bottom bars ---------- */

const BottomArea = styled.div`
  position: relative;
`;
const SnapBar = styled.div`
  display: flex;
  height: 57px;
  font-size: 33px;
`;
const SnapList = styled.div`
  display: flex;
  align-items: center;
  gap: 18px;
  padding: 13px 0 0 8px;
`;
const SnapItem = styled.label<{ $wide?: boolean }>`
  display: flex;
  align-items: center;
  gap: 8px;
  min-width: ${(p) => (p.$wide ? '140px' : '0')};
  white-space: nowrap;
`;
const StatusBar = styled.footer`
  display: flex;
  height: 37px;
  border-top: 1px solid #bcc5dc;
  line-height: 38px;
`;
const StatusCell = styled.div<{ $w: number; $on?: boolean; $start?: boolean }>`
  display: flex;
  align-items: center;
  justify-content: ${(p) => (p.$start ? 'flex-start' : 'center')};
  gap: 4px;
  flex: none;
  width: ${(p) => p.$w}px;
  padding-left: ${(p) => (p.$start ? 6 : 0)}px;
  border-right: 1px solid #c3cadd;
  background: ${(p) => (p.$on ? '#e2f2fc' : 'none')};
`;
const LayerSwatch = styled.span`
  width: 25px;
  height: 25px;
  background: #000;
`;
const StatusToggle = styled.button<{ $on?: boolean }>`
  flex: none;
  padding: 0 11px;
  border: 0;
  border-right: 1px solid #c3cadd;
  background: ${(p) => (p.$on ? '#e2f2fc' : 'none')};
  font-weight: ${(p) => (p.$on ? 700 : 400)};
  line-height: 36px;
`;
const Tolerance = styled.span`
  flex: 1;
  margin-right: 7px;
  padding-left: 2px;
  border-right: 1px solid #c3cadd;
`;
const MiniWindow = styled.div`
  position: absolute;
  bottom: 0;
  left: 15px;
  display: flex;
  align-items: center;
  justify-content: space-between;
  width: 361px;
  height: 60px;
  padding: 0 48px 0 55px;
  border: solid #8c8c8c;
  border-width: 1px 1px 0;
  background: #fff;
  box-shadow: 0 0 8px rgba(0, 0, 0, 0.35);
`;

const TaskBar = styled.footer`
  display: flex;
  height: 100px;
  background: linear-gradient(90deg, #d7d6dc 0%, #d9d7df 30%, #e3d4d9 37%, #dbd8e1 44%, #dad7e1 66%, #dbd7df 80%, #e4d5d9 85%, #dad6df 92%, #ded5da 100%);
`;
const StartButton = styled(PlainButton)`
  width: 120px;
`;
const SearchBox = styled.label`
  display: flex;
  align-items: center;
  gap: 32px;
  width: 860px;
  padding-left: 29px;
  border: 3px solid #c9c9cb;
  background: #fff;
  input {
    flex: 1;
    min-width: 0;
    padding: 0;
    border: 0;
    outline: 0;
    font-size: 39px;
  }
  input::placeholder { color: #333; opacity: 1; }
`;
const PinnedRow = styled.div`
  display: flex;
  flex: 1;
  gap: 4px;
`;
const TaskButton = styled.button<{ $run?: boolean; $active?: boolean }>`
  display: grid;
  place-items: center;
  width: 120px;
  padding: 0;
  border: 0;
  background-color: ${(p) => (p.$active ? '#f1eff2' : 'transparent')};
  background-image: ${(p) => (p.$run || p.$active ? 'linear-gradient(#6b797f, #6b797f)' : 'none')};
  background-position: center bottom;
  background-size: ${(p) => (p.$active ? '100%' : '101px')} 5px;
  background-repeat: no-repeat;
`;
const SystemPair = styled.div`
  display: flex;
  margin-right: 4px;
`;
const Tray = styled.div`
  display: flex;
  align-items: center;
  gap: 20px;
`;
const ImeButton = styled(PlainButton)`
  font-size: 35px;
`;
const Clock = styled.time`
  margin-left: 14px;
  font-size: 32px;
  line-height: 46px;
  text-align: center;
`;
const NoticeButton = styled(PlainButton)`
  margin: 0 12px 0 36px;
`;
const ShowDesktop = styled.button`
  align-self: stretch;
  width: 11px;
  padding: 0;
  border: 0;
  border-left: 2px solid #aaa6ae;
  background: none;
`;

/* ---------- perspective scene ---------- */

type V2 = [number, number];
const CAMERA = [-6.25, -39.31, 10.61];
const FORWARD = [-0.3133, 0.8415, -0.44];
const RIGHT = [0.9371, 0.3489, 0];
const UP = [-0.1535, 0.4123, 0.8979];
const FOCAL = 2758;
const dot = (a: number[], b: number[]) => a[0] * b[0] + a[1] * b[1] + a[2] * b[2];
const toCamera = (x: number, y: number) => {
  const d = [x - CAMERA[0], y - CAMERA[1], -CAMERA[2]];
  return [dot(d, RIGHT), dot(d, UP), dot(d, FORWARD)];
};
const segment = (a: V2, b: V2) => {
  let p = toCamera(...a);
  let q = toCamera(...b);
  const near = 2;
  if (p[2] < near && q[2] < near) return '';
  const clip = (u: number[], v: number[]) => {
    const t = (near - u[2]) / (v[2] - u[2]);
    return u.map((n, i) => n + (v[i] - n) * t);
  };
  if (p[2] < near) p = clip(p, q);
  if (q[2] < near) q = clip(q, p);
  const s = (c: number[]) => `${(1672 + (FOCAL * c[0]) / c[2]).toFixed(1)} ${(1246 - (FOCAL * c[1]) / c[2]).toFixed(1)}`;
  return `M${s(p)}L${s(q)}`;
};
const span = (a: number, b: number) => Array.from({ length: b - a + 1 }, (_, i) => a + i);
const rulings = [
  ...span(-85, 20).map((x) => ({ n: x, d: segment([x, -39], [x, 40]) })),
  ...span(-39, 40).map((y) => ({ n: y, d: segment([-85, y], [20, y]) })),
];
const minorGrid = rulings.filter((l) => l.n % 5).map((l) => l.d).join('');
const majorGrid = rulings.filter((l) => l.n % 5 === 0).map((l) => l.d).join('');
const redGrid = span(-4, 4).map((n) => segment([-4, n], [4, n]) + segment([n, -4], [n, 4])).join('');

const smooth = (pts: V2[], closed = true) => {
  const n = pts.length;
  const at = (i: number) => (closed ? pts[(i + n) % n] : pts[Math.max(0, Math.min(n - 1, i))]);
  let d = `M${pts[0][0]} ${pts[0][1]}`;
  for (let i = 0; i < (closed ? n : n - 1); i++) {
    const [a, b, c, e] = [at(i - 1), at(i), at(i + 1), at(i + 2)];
    d += `C${b[0] + (c[0] - a[0]) / 6} ${b[1] + (c[1] - a[1]) / 6} ${c[0] - (e[0] - b[0]) / 6} ${c[1] - (e[1] - b[1]) / 6} ${c[0]} ${c[1]}`;
  }
  return d;
};

const foot: V2[] = [[856, 1171], [914, 1164], [970, 1166], [1019, 1175], [1065, 1187], [1105, 1201], [1141, 1220], [1169, 1240], [1192, 1262], [1203, 1289], [1201, 1317], [1178, 1346], [1125, 1370], [1058, 1376], [992, 1373], [931, 1366], [873, 1356], [821, 1343], [774, 1328], [734, 1310], [711, 1287], [708, 1261], [727, 1235], [760, 1210], [803, 1188]];
const pit: V2[] = [[931, 1279], [989, 1294], [1016, 1315], [979, 1334], [919, 1330], [877, 1316], [871, 1291]];
const rim: V2[] = [[1699, 900], [1653, 894], [1608, 889], [1561, 884], [1514, 880], [1465, 879], [1417, 881], [1370, 887], [1330, 899], [1299, 914], [1278, 930], [1267, 948], [1263, 966], [1265, 985], [1271, 1005], [1282, 1024], [1296, 1044], [1313, 1063], [1333, 1083], [1356, 1104], [1383, 1124], [1419, 1144], [1457, 1163], [1501, 1181], [1549, 1197], [1601, 1213], [1659, 1226], [1719, 1237], [1784, 1245], [1851, 1249], [1918, 1249], [1984, 1245], [2048, 1240], [2109, 1231], [2167, 1221], [2221, 1209], [2268, 1194], [2308, 1176], [2338, 1156], [2356, 1134], [2361, 1111], [2350, 1087], [2325, 1064], [2290, 1044], [2251, 1025], [2210, 1008], [2167, 992], [2123, 978], [2076, 967], [2030, 957], [1982, 948], [1933, 939], [1887, 927], [1840, 919]];
const middle: V2[] = [[1668, 908], [1629, 904], [1575, 904], [1523, 909], [1477, 920], [1445, 936], [1426, 954], [1417, 974], [1418, 998], [1430, 1022], [1449, 1042], [1479, 1061], [1516, 1079], [1561, 1095], [1611, 1109], [1667, 1121], [1726, 1131], [1788, 1139], [1853, 1144], [1918, 1144], [1982, 1140], [2040, 1131], [2089, 1117], [2127, 1100], [2154, 1079], [2169, 1058], [2167, 1034], [2151, 1012], [2120, 993], [2079, 976], [2031, 961], [1982, 950], [1933, 940]];
const inner: V2[] = [[1668, 909], [1615, 916], [1578, 931], [1568, 953], [1578, 973], [1607, 991], [1647, 1007], [1710, 1022], [1782, 1032], [1844, 1035], [1905, 1031], [1955, 1019], [1987, 1001], [1992, 979], [1969, 958], [1933, 940]];
const crown: V2[] = [[1711, 907], [1730, 932], [1779, 944], [1839, 947], [1868, 935], [1831, 917], [1780, 905]];
const redMarks: V2[] = [[914, 1274], [947, 1277], [1418, 992], [1723, 903], [1702, 912], [1868, 933], [1839, 947], [1696, 1017], [1724, 1020]];
const greenMarks: V2[] = [...foot, ...pit, ...rim, ...middle, ...inner, [1711, 907], [1730, 932], [1779, 944], [1855, 941], [1831, 917], [1780, 905], [1710, 1022]];
const silhouette = `M1264 937L856 1160C790 1180 708 1235 709 1280C720 1345 960 1378 1058 1377C1140 1376 1400 1325 1920 1250C2150 1235 2361 1185 2361 1111C2350 1030 2050 965 1887 932C1840 912 1810 903 1775 907L1690 902C1600 886 1530 880 1465 879C1340 881 1278 915 1264 937Z`;

const Scene = () => (
  <SceneSvg viewBox="160 584 3024 1324" preserveAspectRatio="xMidYMid slice" role="img" aria-label="Perspective">
    <defs>
      <linearGradient id="skin" gradientUnits="userSpaceOnUse" x1="760" y1="1300" x2="1640" y2="1060">
        <stop offset="0" stopColor="#4f5200" />
        <stop offset=".36" stopColor="#655c10" />
        <stop offset=".54" stopColor="#796a2b" />
        <stop offset=".66" stopColor="#8b7143" />
        <stop offset=".78" stopColor="#a07a55" />
        <stop offset="1" stopColor="#b08a58" />
      </linearGradient>
      <filter id="soft" x="-60%" y="-60%" width="220%" height="220%"><feGaussianBlur stdDeviation="34" /></filter>
      <filter id="softer" x="-60%" y="-60%" width="220%" height="220%"><feGaussianBlur stdDeviation="16" /></filter>
      <clipPath id="body"><path d={silhouette} /></clipPath>
      <clipPath id="lid"><path d={smooth(rim)} /></clipPath>
      <g id="cross">
        <path d="M-5 -12L0 -5L5 -12L12 -7L6 0L12 7L5 12L0 6L-5 12L-12 7L-6 0L-12 -7Z" />
      </g>
    </defs>
    <path d={minorGrid} stroke="#8d949b" strokeWidth="1" fill="none" />
    <path d={majorGrid} stroke="#7b7a83" strokeWidth="1" fill="none" />
    <path d={redGrid} stroke="#a3141c" strokeWidth="1" fill="none" />
    <path d={segment([0, 0], [0, 40])} stroke="#157a1c" strokeWidth="2" />
    <g clipPath="url(#body)">
      <path d={silhouette} fill="url(#skin)" />
      <path d="M1180 1330L1900 1190V1250L1180 1370Z" fill="#ab8556" filter="url(#softer)" opacity=".6" />
      <path d="M1100 1376L1900 1250" stroke="#6e621b" strokeWidth="20" filter="url(#softer)" />
      <ellipse cx="1620" cy="1210" rx="130" ry="30" fill="#bb8d6c" filter="url(#soft)" />
      <path d="M1230 960L880 1160" stroke="#70621f" strokeWidth="40" filter="url(#softer)" opacity=".7" />
      <ellipse cx="940" cy="1310" rx="130" ry="44" fill="#2f3700" filter="url(#soft)" />
      <ellipse cx="800" cy="1260" rx="60" ry="50" fill="#475000" filter="url(#soft)" opacity=".7" />
    </g>
    <g clipPath="url(#lid)">
      <path d={smooth(rim)} fill="#9f7a54" />
      <ellipse cx="1600" cy="1215" rx="120" ry="30" fill="#bd8e70" filter="url(#soft)" />
      <g transform="rotate(6 1810 1010)">
        <ellipse cx="1805" cy="1015" rx="450" ry="128" fill="#9d8a2c" filter="url(#soft)" />
        <ellipse cx="1800" cy="995" rx="350" ry="110" fill="#a8921d" filter="url(#soft)" />
      </g>
      <ellipse cx="1770" cy="950" rx="170" ry="50" fill="#bf9b1e" filter="url(#soft)" />
      <path d="M1700 940L1800 950L1750 1090L1700 1220H1580Z" fill="#c6aa42" filter="url(#soft)" opacity=".65" />
    </g>
    <g fill="none" stroke="#241408" strokeWidth="2">
      <path d={smooth(foot)} />
      <path d={smooth(rim, false)} />
      <path d={smooth(middle, false)} />
      <path d={smooth(inner, false)} stroke="#8a1a10" />
      <path d={smooth(crown)} />
      <path d={smooth(rim.slice(0, 9), false)} stroke="#8a1a10" />
      <path d={smooth(pit.slice(0, 2), false)} />
      <path d={smooth(pit.slice(3, 5), false)} />
    </g>
    <g fill="#980000">{redMarks.map(([x, y], i) => <use key={i} href="#cross" x={x} y={y} />)}</g>
    <g fill="#009400">{greenMarks.map(([x, y], i) => <use key={i} href="#cross" x={x} y={y} />)}</g>
    <path d="M250 1750V1818L321 1829M250 1818L276 1788" stroke="#5f6163" strokeWidth="2" fill="none" />
    <g fill="#5f6163" fontSize="33" fontFamily="Open Sans">
      <text x="257" y="1752">z</text>
      <text x="282" y="1786">y</text>
      <text x="328" y="1832">x</text>
    </g>
  </SceneSvg>
);

/* ---------- data ---------- */

const menus = ['文件(F)', '编辑(E)', '查看(V)', '曲线(C)', '曲面(S)', '实体(O)', '网格(M)', '尺寸标注(D)', '变动(T)', '工具(L)', '分析(A)', '渲染(R)', '面板(P)', 'SectionTools', '说明(H)'];
const toolTabs = ['标准', '工作平面', '设置视图', '显示', '选取', '工作视窗配置', '可见性', '变动', '曲线工具', '曲面工具', '实体工具', '网格工具', '渲染工具', '出图', 'V6 的新功能'];

const viewTools: Spec[][] = [
  [['hand', '平移'], ['orbit', '旋转'], ['zoomDyn', '动态缩放'], ['zoomExt', '缩放至最大范围'], ['zoomWin', '框选缩放'], ['zoomSel', '缩放至选取物件'], ['undoView', '复原视图', true], ['zoomTarget', '缩放目标'], ['zoomOne', '1:1']],
  [['carTop', 'Top'], ['carBottom', 'Bottom'], ['carFront', 'Front'], ['carRight', 'Right'], ['carLeft', 'Left'], ['carBack', 'Back'], ['carPersp', 'Perspective']],
  [['namedView', '已命名视图'], ['camera', '摄像机'], ['saveView', '保存视图'], ['openView', '打开视图'], ['sphereOne', '一点'], ['sphereTwo', '两点']],
  [['target', '目标点'], ['targetSel', '目标点至物件'], ['cplane', '正对工作平面'], ['camPlane', '摄像机平面'], ['cage', '视锥']],
  [['planeTop', '俯视'], ['planeBottom', '仰视'], ['planeFront', '前视'], ['planeBack', '后视'], ['planeLeft', '左视'], ['planeRight', '右视']],
  [['turn', '360°'], ['walk', '行走', true], ['compass', '方位', true], ['dial', '倾斜']],
];
const solidTools: Spec[] = [['box', '立方体', true], ['cylinder', '圆柱体'], ['sphere', '球体', true], ['sphereH', '球体两点'], ['ellipsoid', '椭圆体', true], ['paraboloid', '抛物面锥体'], ['cone', '圆锥体'], ['truncCone', '平顶锥体'], ['pyramid', '棱锥'], ['truncPyramid', '平顶棱锥'], ['tube', '圆柱管'], ['torus', '环状体'], ['pipe', '圆管'], ['pipeCap', '圆管圆头'], ['extrude', '挤出曲线'], ['extrudeCap', '挤出曲面', true], ['puzzles', '组合']];
const surfaceTools: Spec[] = [['srfPts', '角点'], ['srfRing', '平面曲线'], ['srfLoft', '放样'], ['srfSweep', '扫掠'], ['srfPatch', '嵌面'], ['srfNet', '网线'], ['srfPlane', '矩形平面', true], ['srfPlane3', '三点平面'], ['srfVert', '垂直平面'], ['srfFree', '逼近平面'], ['srfCut', '切割平面'], ['srfHeat', '图像平面'], ['srfExt1', '直线挤出', true], ['srfExt2', '沿曲线挤出'], ['srfTaper', '锥状挤出'], ['srfPoint', '挤出至点'], ['srfRibbon', '彩带'], ['srfWrap', '法线方向挤出'], ['srfRail1', '单轨扫掠'], ['srfRail2', '双轨扫掠'], ['srfRevolve', '旋转成形'], ['srfDrape', '帘布'], ['srfPicture', '高度场'], ['srfGrid', '点阵曲面'], ['srfEraser', '延展']];
const renderTools: Spec[][] = [
  [['vray', 'V-Ray']],
  [['teapotHand', '交互渲染', true], ['teapotFrame', '渲染'], ['frameWin', '帧缓存']],
  [['dome', '灯光', true], ['cubeUp', '代理', true], ['planeInf', '无限平面'], ['fur', '毛发'], ['clipper', '剖切'], ['domeTarget', '场景', true]],
];
const sideTools: Spec[] = [
  ['select', '选取'], ['point', '点', true], ['polyline', '多重直线', true], ['curve', '曲线', true], ['circle', '圆', true], ['ellipse', '椭圆', true], ['arc', '圆弧', true], ['rect', '矩形', true], ['polygon', '多边形', true], ['fillet', '圆角', true], ['patch', '曲面', true], ['srfFillet', '曲面圆角', true], ['box', '立方体', true], ['spheres', '布尔运算', true], ['project', '投影', true], ['mesh', '网格', true], ['join', '组合'], ['explode', '炸开'], ['trim', '修剪'], ['split', '分割'], ['group', '群组', true], ['ungroup', '解散群组'], ['editPts', '编辑点'], ['ctrlPts', '控制点', true], ['text', '文字'], ['move', '移动', true], ['copy', '复制'], ['rotate', '旋转'], ['boolean', '实体', true], ['extrudeUp', '挤出', true], ['array', '阵列', true], ['align', '对齐', true], ['skew', '变形', true], ['check', '检查', true], ['solids', '显示', true], ['block', '图块', true],
];

type Row = { name: string; kind?: 'button' | 'select' | 'file' | 'check'; value?: string; locked?: boolean; dim?: boolean };
const sections: { title: string; rows: Row[] }[] = [
  { title: '工作视窗', rows: [{ name: '标题', value: 'Perspective' }, { name: '宽度', value: '3024', locked: true, dim: true }, { name: '高度', value: '1324', locked: true, dim: true }, { name: '投影', kind: 'select', value: '透视' }] },
  { title: '摄像机', rows: [{ name: '镜头焦距', value: '50.0' }, { name: '旋转', value: '0.0' }, { name: 'X 座标', value: '-6.25' }, { name: 'Y 座标', value: '-39.31' }, { name: 'Z 座标', value: '10.61' }, { name: '目标点距离', value: '29.59', locked: true }, { name: '位置', kind: 'button', value: '放置...' }] },
  { title: '目标点', rows: [{ name: 'X 座标', value: '-15.52' }, { name: 'Y 座标', value: '-14.41' }, { name: 'Z 座标', value: '-2.41' }, { name: '位置', kind: 'button', value: '放置...' }] },
  { title: '底色图案', rows: [{ name: '文件名称', kind: 'file', value: '(无)' }, { name: '显示', kind: 'check' }, { name: '灰阶', kind: 'check' }] },
];

const snaps: { name: string; on?: boolean; off?: boolean }[] = [
  { name: '端点', on: true }, { name: '最近点', on: true }, { name: '点', on: true }, { name: '中点', on: true }, { name: '中心点' }, { name: '交点', on: true }, { name: '垂点', on: true }, { name: '切点' }, { name: '四分点', on: true }, { name: '节点', on: true }, { name: '顶点', on: true }, { name: '投影', off: true }, { name: '停用', off: true },
];
const toggles: [string, boolean][] = [['锁定格点', false], ['正交', false], ['平面模式', false], ['物件锁点', true], ['智慧轨迹', true], ['操作轴', true], ['记录建构历史', false], ['过滤器', false]];

/* ---------- panel and task bar drawings ---------- */

const hues = ['#f00', '#f80', '#ff0', '#8f0', '#0f0', '#0f8', '#0ff', '#08f', '#00f', '#80f', '#f0f', '#f08'];
const panelIcons: [string, ReactNode][] = [
  ['属性', <><circle cx="20" cy="20" r="18" fill="#111" />{hues.map((c, i) => <path key={c} d="M20 4A16 16 0 0 1 28.400 6.400L25 12A10 10 0 0 0 20 10Z" fill={c} stroke={c} transform={`rotate(${i * 30} 20 20)`} />)}<circle cx="20" cy="20" r="10" fill="#fff" /></>],
  ['图层', <><P f="#ff5a2a" d="M2 2L38 10L16 20Z" /><P f="#e02a10" d="M2 2L16 20V26L2 12ZM16 20L38 10V17L16 27Z" /><P f="#fff" d="M2 12L16 26V31L2 18ZM16 26L38 17V22L16 32Z" /><P f="#2440b0" d="M2 18L16 31V38L3 24ZM16 32L38 22V28L16 38Z" /></>],
  ['渲染', <><Globe x={17} y={23} r={15} /><P f="#fff" s="#222" d="M14 12L24 4L38 3V10L28 12L20 16Z" /></>],
  ['材质', <><P f="#fff" d="M4 28L16 20L22 27L10 37Z" /><P f="#e8621c" d="M17 18L28 8L33 16L23 27Z" /><P f="#eee" d="M27 7L32 3L36 9L33 15Z" /></>],
  ['图库', <><P f="#ffd34d" s="#5a4200" d="M3 32V10H14L18 14H33V18" /><P f="#ffdf77" s="#5a4200" d="M3 32L10 18H38L32 32Z" /></>],
  ['说明', <><rect x="3" y="4" width="34" height="32" fill="#eef" stroke="#222" strokeWidth="2" /><rect x="4" y="5" width="32" height="5" fill="#7a7ae0" /><circle cx="20" cy="23" r="12" fill="#3a5bd0" /><text x="20" y="32" fontSize="24" fontWeight="700" fill="#fff" textAnchor="middle" fontFamily="Liberation Serif">?</text></>],
  ['摄像机', <g transform="translate(0 1) scale(.56)"><Camera /></g>],
  ['注解', <><P f="#fff" s="#444" d="M3 4H28V18H3Z" /><P f="#fff" s="#333" d="M14 8H36V36H14Z" /><P s="#777" d="M17 14H32M17 19H32M17 24H30M17 29H32" /></>],
  ['显示', <><rect x="3" y="5" width="34" height="25" fill="#aaa" stroke="#111" strokeWidth="4" /><P f="#222" d="M16 30H24L27 36H13Z" /></>],
];

const RhinoLogo = ({ size }: { size: number }) => (
  <svg width={size} height={size} viewBox="0 0 60 60" aria-hidden="true">
    <rect width="60" height="60" fill="#161616" />
    <path d="M3 30L8 22L6 10L16 2L17 16L24 24L36 30L46 32L58 24L54 38L46 46L44 56L36 59L30 48L22 44L14 34Z" fill="#fff" />
    <path d="M10 12L13 26L22 40M20 24L18 32M34 36L40 42L36 46" stroke="#161616" strokeWidth="3" fill="none" />
    <text x="42" y="23" fontSize="27" fill="#fff" fontFamily="Open Sans">6</text>
  </svg>
);

const tasks: [string, ReactNode, boolean?][] = [
  ['Edge', <><defs><linearGradient id="edge" x1="0" x2="1"><stop offset="0" stopColor="#1b8fd8" /><stop offset=".6" stopColor="#2cc4d0" /><stop offset="1" stopColor="#5ee05a" /></linearGradient></defs><circle cx="30" cy="30" r="29" fill="#1283d6" /><path d="M2 24C6 6 20 1 31 1C48 1 59 12 59 26C59 36 52 40 45 40C38 40 34 38 36 34C38 26 34 20 24 18C14 17 5 22 2 24Z" fill="url(#edge)" /><path d="M24 22C14 30 18 58 40 57C48 56 54 50 57 44C48 50 34 48 31 38C30 32 34 28 32 24Z" fill="#0f4f9c" /><path d="M36 34C33 38 38 42 46 41C54 40 58 34 60 28V46L57 44C50 50 34 48 31 38C30 34 33 30 36 29Z" fill="#dfd6dc" /></>],
  ['文件资源管理器', <><path d="M4 8H22L28 14V20H4Z" fill="#dd9c10" /><rect x="3" y="14" width="54" height="36" rx="2" fill="#ffd35e" /><path d="M12 52V36Q12 31 17 31H42Q47 31 47 36V52H38V41H22V52Z" fill="#3b94dd" /></>, true],
  ['Microsoft Store', <><path d="M15 18V3H45V18" stroke="#222" strokeWidth="5" fill="none" /><rect x="1" y="16" width="58" height="44" rx="2" fill="#313133" /><path d="M19 28H29V38H19Z" fill="#f25022" /><path d="M31 28H41V38H31Z" fill="#7fba00" /><path d="M19 40H29V50H19Z" fill="#00a4ef" /><path d="M31 40H41V50H31Z" fill="#ffb900" /></>],
  ['邮件', <><path d="M1 19L30 1L59 19V26H1Z" fill="#0a5fae" /><path d="M6 19H54V40H6Z" fill="#f1f3f6" /><path d="M1 20L30 38L59 20V57H1Z" fill="#3cc1f3" /><path d="M1 57L30 38L59 57Z" fill="#1b8fde" /><path d="M1 20L30 38L1 57Z" fill="#1f9ae6" /></>],
  ['Photoshop', <><rect x="2" y="2" width="54" height="54" fill="#001d26" stroke="#00c8ff" strokeWidth="3" /><text x="29" y="40" fontSize="31" textAnchor="middle" fill="#00c8ff" fontFamily="Open Sans" fontWeight="600">Ps</text></>],
  ['Chrome', <><circle cx="30" cy="30" r="28" fill="#dd5144" /><path d="M30 30L5 17A28 28 0 0 0 28 58L42 37Z" fill="#1da362" /><path d="M30 18H55A28 28 0 0 1 28 58L42 36Z" fill="#ffcd46" /><circle cx="30" cy="30" r="14" fill="#fff" /><circle cx="30" cy="30" r="11" fill="#4c8bf5" /></>, true],
  ['设置', <g transform="translate(30 30)">{[0, 45, 90, 135, 180, 225, 270, 315].map((a) => <path key={a} d="M-4 -23h8l2 8h-12z" fill="#3b3b3d" transform={`rotate(${a})`} />)}<circle r="14" fill="none" stroke="#3b3b3d" strokeWidth="6" /></g>, true],
  ['微信', <><path d="M23 5C8 5 1 15 1 25C1 32 4 37 9 40L8 45L15 42C36 45 46 35 46 24C46 13 37 5 23 5Z" fill="#22d168" /><circle cx="16" cy="18" r="3" fill="#0a7a3a" /><circle cx="30" cy="18" r="3" fill="#0a7a3a" /><path d="M42 22C30 22 25 31 25 38C25 48 33 54 45 53L54 57L53 50C58 47 60 42 60 37C59 28 52 22 42 22Z" fill="#ececec" /><circle cx="36" cy="33" r="2" fill="#888" /><circle cx="48" cy="33" r="2" fill="#888" /></>, true],
  ['DeepL', <><rect width="60" height="60" rx="6" fill="#fff" /><path d="M30 4L50 15V38L37 46V54L28 48L10 38V15Z" fill="#0f2b46" /><path d="M24 22L38 29L25 37" stroke="#fff" strokeWidth="2" fill="none" /><circle cx="24" cy="22" r="4" fill="#fff" /><circle cx="38" cy="29" r="4" fill="#fff" /><circle cx="25" cy="37" r="4" fill="#fff" /></>, true],
  ['计算器', <><rect x="7" y="0" width="47" height="60" rx="3" fill="#6f7c86" /><rect x="11" y="4" width="39" height="10" fill="#41d8fb" />{[19, 32, 45].map((y) => [11, 25, 39].map((x) => <rect key={`${x}${y}`} x={x} y={y} width="10" height="10" rx="1" fill={x === 39 && y > 19 ? '#1a4f9c' : '#cdd6dc'} />))}<rect x="39" y="32" width="10" height="23" fill="#1a4f9c" /></>, true],
  ['Acrobat', <><rect x="3" y="2" width="54" height="54" fill="#220808" stroke="#f01c0c" strokeWidth="4" /><path d="M14 44C22 40 32 26 30 14C29 9 26 10 27 15C29 25 36 34 46 36C50 36 50 33 45 33C34 32 22 38 16 45C13 47 12 46 14 44Z" stroke="#fff" strokeWidth="2" fill="none" /></>, true],
];

/* ---------- pieces ---------- */

const CameraPage = () => <svg width="54" height="54" viewBox="4 4 62 62"><Camera /></svg>;

const PropertyRow = ({ row, id }: { row: Row; id: string }) => (
  <tr>
    <Indent />
    <NameCell $dim={row.dim} scope="row"><label htmlFor={id}>{row.name}</label></NameCell>
    <ValueCell $locked={row.locked}>
      <ValueRow>
        {!row.kind && <ValueInput id={id} defaultValue={row.value} readOnly={row.locked} $dim={row.dim} />}
        {row.kind === 'select' && (
          <SelectBox>
            <select id={id} defaultValue={row.value}><option>{row.value}</option></select>
            <SelectArrow><svg width="18" height="10" viewBox="0 0 18 10"><path d="M1 1L9 9L17 1" fill="none" stroke="#444" strokeWidth="2" /></svg></SelectArrow>
          </SelectBox>
        )}
        {row.kind === 'button' && <PushButton id={id}>{row.value}</PushButton>}
        {row.kind === 'file' && <><ValueInput id={id} defaultValue={row.value} /><PushButton $small aria-label="浏览">...</PushButton></>}
        {row.kind === 'check' && <ValueCheck id={id} defaultChecked />}
      </ValueRow>
    </ValueCell>
  </tr>
);

const PropertiesPanel = () => (
  <PanelColumn>
    <SideGrip />
    <PanelTabs>
      {panelIcons.map(([label, art], i) => (
        <PanelTab key={label} aria-label={label} $active={i === 0}>
          <svg width="38" height="38" viewBox="0 0 40 40">{art}</svg>
        </PanelTab>
      ))}
      <PanelGear aria-label="面板选项"><Gear /></PanelGear>
    </PanelTabs>
    <PanelBody>
      <PageButtons>
        <PageButton $active aria-label="视图"><CameraPage /></PageButton>
        <PageButton aria-label="边框">
          <svg width="58" height="52" viewBox="0 0 58 52"><rect x="2" y="2" width="54" height="48" fill="#d0d0d0" stroke="#111" strokeWidth="3" /><rect x="7" y="7" width="44" height="38" fill="#ddd" stroke="#3fb4ea" strokeWidth="3" /><rect x="11" y="12" width="36" height="28" fill="#fff" stroke="#e8141c" strokeWidth="3" /></svg>
        </PageButton>
        <PageButton aria-label="材质">
          <svg width="56" height="56" viewBox="0 0 56 56"><ellipse cx="20" cy="50" rx="16" ry="5" fill="#888" /><Globe x={47} y={9} r={7} /><Globe x={36} y={20} r={10} /><Globe x={19} y={35} r={15} /></svg>
        </PageButton>
      </PageButtons>
      <PropTable>
        <colgroup><IndentCol /><NameCol /><col /></colgroup>
        {sections.map((s, i) => (
          <tbody key={s.title}>
            <tr><SectionCell colSpan={3} scope="rowgroup">{s.title}</SectionCell></tr>
            {s.rows.map((r, j) => <PropertyRow key={j} row={r} id={`prop-${i}-${j}`} />)}
          </tbody>
        ))}
      </PropTable>
    </PanelBody>
  </PanelColumn>
);

const PaintSvg = styled.svg`
  position: absolute;
`;
const SharedPaint = () => (
  <PaintSvg width="0" height="0" aria-hidden="true">
    <defs>
      <linearGradient id="tube"><stop offset="0" stopColor="#8ea4ff" /><stop offset=".3" stopColor="#6582ff" /><stop offset="1" stopColor="#1b2f96" /></linearGradient>
      <linearGradient id="patch" x1="0" y1="0" x2="1" y2="1"><stop offset="0" stopColor="#c0cdff" /><stop offset="1" stopColor="#5a78fb" /></linearGradient>
      <linearGradient id="gray" x1="0" y1="0" x2="1" y2="1"><stop offset="0" stopColor="#fff" /><stop offset="1" stopColor="#8f8f8f" /></linearGradient>
      <linearGradient id="glass" x1="0" y1="0" x2="1" y2="1"><stop offset="0" stopColor="#fff" /><stop offset="1" stopColor="#e2e3e6" /></linearGradient>
      <linearGradient id="fire" x1="0" y1="1" x2="1" y2="0"><stop offset="0" stopColor="#ffc400" /><stop offset="1" stopColor="#f03a0a" /></linearGradient>
      <radialGradient id="ball" cx=".35" cy=".3" r=".8"><stop offset="0" stopColor="#c5d1ff" /><stop offset=".45" stopColor="#5c7af8" /><stop offset="1" stopColor="#15246f" /></radialGradient>
      <radialGradient id="navy" cx=".35" cy=".3" r=".8"><stop offset="0" stopColor="#c5e0ff" /><stop offset=".4" stopColor="#2a55d0" /><stop offset="1" stopColor="#0a1466" /></radialGradient>
    </defs>
  </PaintSvg>
);

const Glyph = ({ d, size = 24, color = '#fff', w = 2 }: { d: string; size?: number; color?: string; w?: number }) => (
  <svg width={size} height={size} viewBox="0 0 24 24" aria-hidden="true"><path d={d} fill="none" stroke={color} strokeWidth={w} /></svg>
);

export default function App() {
  return (
    <Page>
      <GlobalStyle />
      <SharedPaint />
      <TitleBar>
        <RhinoLogo size={42} />
        <AppTitle>Rhinoceros 6 商业版 - [Perspective]</AppTitle>
        <WindowButton aria-label="最小化"><Glyph d="M1 12H23" /></WindowButton>
        <WindowButton aria-label="还原"><Glyph d="M2 7H17V22H2ZM7 7V2H22V17H17" /></WindowButton>
        <WindowButton aria-label="关闭"><Glyph d="M2 2L22 22M22 2L2 22" /></WindowButton>
      </TitleBar>
      <MenuBar>{menus.map((m) => <MenuItem key={m}>{m}</MenuItem>)}</MenuBar>

      <CommandArea>
        <HistoryRow>
          <HistoryText>
            <p>已加入 1 条曲线至选取集合。</p>
            <p>指令: Hide</p>
          </HistoryText>
          <Stepper $w={42}>
            <StepButton aria-label="向上"><Glyph d="M3 16L12 7L21 16" color="#444" w={4} size={22} /></StepButton>
            <StepButton aria-label="向下"><Glyph d="M3 8L12 17L21 8" color="#444" w={4} size={22} /></StepButton>
          </Stepper>
        </HistoryRow>
        <CommandRow>
          <label htmlFor="command">指令:</label>
          <CaretMark />
          <CommandInput id="command" />
          <Stepper $w={29}>
            <StepButton $framed aria-label="上一个"><svg width="12" height="8"><path d="M0 8L6 0L12 8Z" /></svg></StepButton>
            <StepButton $framed aria-label="下一个"><svg width="12" height="8"><path d="M0 0L6 8L12 0Z" /></svg></StepButton>
          </Stepper>
        </CommandRow>
      </CommandArea>

      <TabStrip>
        <TabList>{toolTabs.map((t) => <ToolTab key={t} $active={t === '设置视图'}>{t}</ToolTab>)}</TabList>
        <PlainButton aria-label="工具列选项"><Gear size={36} /></PlainButton>
      </TabStrip>
      <ToolRow $h={77} $line>
        <Grip />
        <ToolBar><Groups groups={viewTools} /></ToolBar>
      </ToolRow>
      <ToolRow $h={115} $line>
        <Grip />
        <ToolBar $grow $pad={4}>{solidTools.map((s) => <Tool key={s[0]} spec={s} />)}</ToolBar>
        <Divider $full />
        <Grip />
        <ToolBar $pad={4}>{surfaceTools.map((s) => <Tool key={s[0]} spec={s} />)}</ToolBar>
      </ToolRow>
      <ToolRow $h={88}>
        <Grip />
        <ToolBar $pad={2}><Groups groups={renderTools} /></ToolBar>
      </ToolRow>

      <Workspace>
        <SideTools>
          <SideGrip />
          <SideGrid>{sideTools.map((s) => <Tool key={s[0]} spec={s} />)}</SideGrid>
        </SideTools>
        <ViewColumn>
          <Viewport>
            <Scene />
            <ViewLabel>
              Perspective
              <ViewMenuMark><svg width="18" height="9"><path d="M0 0H18L9 9Z" /></svg></ViewMenuMark>
            </ViewLabel>
          </Viewport>
          <ViewTabs>
            <ViewTab $active>Perspective</ViewTab>
            <ViewTab>Top</ViewTab>
            <ViewTab>Front</ViewTab>
            <ViewTab>Right</ViewTab>
            <ViewTab $active aria-label="新增视图"><svg width="36" height="24" viewBox="0 0 36 24"><path d="M9 1H15V9H22V15H15V23H9V15H2V9H9Z" fill="#fff" stroke="#777" /></svg></ViewTab>
          </ViewTabs>
        </ViewColumn>
        <PropertiesPanel />
      </Workspace>

      <BottomArea>
        <SnapBar>
          <Grip />
          <SnapList>
            {snaps.map((s) => (
              <SnapItem key={s.name} $wide={s.name === '投影'}>
                <CheckBox defaultChecked={s.on} disabled={s.off} />
                {s.name}
              </SnapItem>
            ))}
          </SnapList>
        </SnapBar>
        <StatusBar>
          <StatusCell $w={141} $on />
          <StatusCell $w={208} />
          <StatusCell $w={208}>y -18.43</StatusCell>
          <StatusCell $w={208}>z 0.00</StatusCell>
          <StatusCell $w={209}>米</StatusCell>
          <StatusCell $w={408} $start><LayerSwatch />预设值</StatusCell>
          {toggles.map(([t, on]) => <StatusToggle key={t} $on={on}>{t}</StatusToggle>)}
          <Tolerance>绝对公差: 0.01</Tolerance>
        </StatusBar>
        <MiniWindow>
          <Glyph d="M2 7H17V22H2ZM7 7V2H22V17H17" color="#999" />
          <Glyph d="M2 2H22V22H2Z" color="#999" />
          <Glyph d="M2 2L22 22M22 2L2 22" color="#999" />
        </MiniWindow>
      </BottomArea>

      <TaskBar>
        <StartButton aria-label="开始">
          <svg width="40" height="40" viewBox="0 0 40 40"><path d="M0 6L17 3V19H0ZM19 3L40 0V19H19ZM0 21H17V37L0 34ZM19 21H40V40L19 37Z" /></svg>
        </StartButton>
        <SearchBox>
          <svg width="48" height="48" viewBox="0 0 48 48" aria-hidden="true"><circle cx="31" cy="17" r="15" fill="none" stroke="#000" strokeWidth="3" /><path d="M20 28L1 47" stroke="#000" strokeWidth="3" /></svg>
          <input placeholder="在这里输入你要搜索的内容" aria-label="搜索" />
        </SearchBox>
        <PinnedRow>
          <SystemPair>
            <TaskButton aria-label="Cortana"><svg width="40" height="40"><circle cx="20" cy="20" r="17" fill="none" stroke="#000" strokeWidth="5" /></svg></TaskButton>
            <TaskButton aria-label="任务视图"><svg width="42" height="40" viewBox="0 0 42 40"><path d="M2 1V8H27V1M2 39V32H27V39M2 12H27V28H2ZM38 1V10M38 20V39" fill="none" stroke="#000" strokeWidth="2" /><circle cx="38" cy="15" r="4" /></svg></TaskButton>
          </SystemPair>
          {tasks.map(([label, art, run]) => (
            <TaskButton key={label} $run={run} aria-label={label}><svg width="60" height="60" viewBox="0 0 60 60">{art}</svg></TaskButton>
          ))}
          <TaskButton $active aria-label="Rhinoceros 6"><RhinoLogo size={60} /></TaskButton>
        </PinnedRow>
        <Tray>
          <PlainButton aria-label="显示隐藏的图标"><svg width="34" height="20" viewBox="0 0 34 20"><path d="M1 18L17 2L33 18" fill="none" stroke="#000" strokeWidth="2" /></svg></PlainButton>
          <PlainButton aria-label="电池"><svg width="40" height="30" viewBox="0 0 40 30"><path d="M12 6H36V28H10V22" fill="none" stroke="#000" strokeWidth="2" /><path d="M14 10H33V24H10ZM37 12H40V21H37Z" /><path d="M3 0V6M9 0V6M6 17V29" stroke="#000" strokeWidth="2" /><path d="M1 6H11V13L8 17H4L1 13Z" fill="#ddd" stroke="#000" strokeWidth="2" /></svg></PlainButton>
          <PlainButton aria-label="音量"><svg width="38" height="30" viewBox="0 0 38 30"><path d="M1 9H6L14 1V29L6 22H1ZM22 8L36 23M36 8L22 23" fill="none" stroke="#000" strokeWidth="2" /></svg></PlainButton>
          <PlainButton aria-label="网络"><svg width="46" height="32" viewBox="-10 0 46 32"><path d="M2 31C3 14 16 2 32 1M10 31C11 18 20 10 32 9M18 31C19 24 24 18 32 17" fill="none" stroke="#000" strokeWidth="2" /><circle cx="29" cy="28" r="3" /></svg></PlainButton>
          <ImeButton>英</ImeButton>
          <Clock><div>17:32</div><div>2021/8/6</div></Clock>
          <NoticeButton aria-label="通知">
            <svg width="62" height="62" viewBox="0 0 62 62"><path d="M2 2H42V34H24L16 41V34H2Z" /><path d="M9 10H35M9 18H35M9 26H26" stroke="#dcd7df" strokeWidth="3" /><circle cx="41" cy="40" r="20" fill="#cfcdd2" stroke="#555" /><text x="41" y="51" fontSize="30" fontWeight="700" textAnchor="middle" fontFamily="Open Sans">7</text></svg>
          </NoticeButton>
          <ShowDesktop aria-label="显示桌面" />
        </Tray>
      </TaskBar>
    </Page>
  );
}
